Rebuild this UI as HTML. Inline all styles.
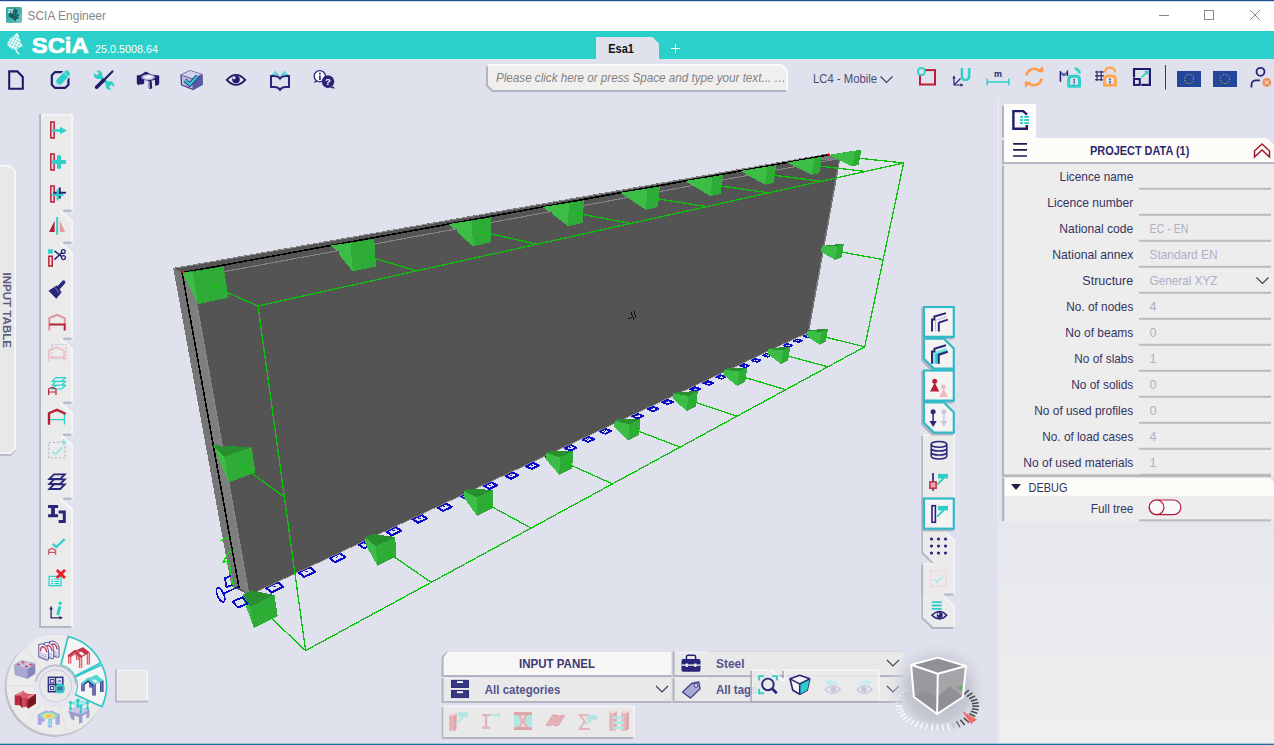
<!DOCTYPE html>
<html><head><meta charset="utf-8"><title>SCIA Engineer</title>
<style>html,body{margin:0;padding:0;background:#dfe1ec;overflow:hidden;width:1274px;height:745px;font-family:"Liberation Sans",sans-serif}svg text{white-space:pre}</style>
</head><body>
<svg width="1274" height="745" viewBox="0 0 1274 745" style="display:block">
<rect x="0.00" y="0.00" width="1274.00" height="745.00" fill="#dfe1ec" />
<rect x="0.00" y="0.00" width="1274.00" height="31.00" fill="#ffffff" />
<rect x="0.00" y="0.00" width="1274.00" height="1.20" fill="#1d4f8f" />
<text x="27.50" y="20.00" font-size="12.3" fill="#878787" font-weight="normal" text-anchor="start" font-style="normal" font-family="Liberation Sans, sans-serif" textLength="78.50" lengthAdjust="spacingAndGlyphs" >SCIA Engineer</text>
<path d="M1159 15.5 h10" stroke="#8a8a8a" stroke-width="1"/>
<rect x="1204.5" y="10.5" width="9" height="9" fill="none" stroke="#8a8a8a" stroke-width="1"/>
<path d="M1250 10 l10 10 M1260 10 l-10 10" stroke="#8a8a8a" stroke-width="1"/>
<rect x="0.00" y="31.00" width="1274.00" height="28.00" fill="#2ad0c9" />
<text x="31.80" y="52.80" font-size="21.2" fill="#fff" font-weight="bold" text-anchor="start" font-style="normal" font-family="Liberation Sans, sans-serif" textLength="56.80" lengthAdjust="spacingAndGlyphs" stroke="#fff" stroke-width="0.7">SCiA</text>
<text x="95.00" y="53.00" font-size="11" fill="#fff" font-weight="normal" text-anchor="start" font-style="normal" font-family="Liberation Sans, sans-serif" textLength="63.00" lengthAdjust="spacingAndGlyphs" >25.0.5008.64</text>
<polygon points="596.00,59.00 596.00,37.00 652.50,37.00 659.00,43.50 659.00,59.00" fill="#dfe1ec" />
<text x="608.30" y="53.30" font-size="12" fill="#111" font-weight="bold" text-anchor="start" font-style="normal" font-family="Liberation Sans, sans-serif" textLength="25.60" lengthAdjust="spacingAndGlyphs" >Esa1</text>
<path d="M671 48.500 h9 M675.500 44 v9" stroke="#fff" stroke-width="1"/>
<rect x="0.00" y="742.80" width="1274.00" height="1.00" fill="#e6e7f0" />
<rect x="0.00" y="743.70" width="1274.00" height="1.30" fill="#1d719c" />
<rect x="997.80" y="99.00" width="1.20" height="644.00" fill="#eceef3" />
<g shape-rendering="crispEdges"><polygon points="173.20,267.90 827.50,153.60 839.70,158.50 808.40,332.30 249.00,595.20 231.40,586.00" fill="#545454" />
<polygon points="173.20,267.90 192.00,277.50 249.00,595.20 239.00,587.60 231.40,586.00" fill="#767676" />
<polygon points="182.10,272.60 192.00,277.50 249.00,595.20 239.00,587.60" fill="#7e7e7e" />
<line x1="173.20" y1="268.50" x2="827.50" y2="154.20" stroke="#8a8a8a" stroke-width="1.0" />
<polygon points="812.00,157.30 827.50,153.60 839.70,158.50 826.00,160.30" fill="#7a7a7a" />
<polyline points="239.00,587.60 182.10,272.60 828.40,154.90" fill="none" stroke="#000" stroke-width="1.6" stroke-linejoin="miter"/>
<circle cx="182.3" cy="272.3" r="1.2" fill="#ff0000"/>
<circle cx="828.6" cy="154.6" r="1.3" fill="#ff0000"/>
<polygon points="266.06,587.77 277.68,582.26 282.98,586.96 271.36,592.47" fill="none" stroke="#0a0acd" stroke-width="2.1" stroke-linejoin="round"/>
<line x1="272.59" y1="586.84" x2="275.71" y2="586.44" stroke="#0a0acd" stroke-width="0.9" />
<polygon points="298.66,572.50 309.62,567.30 315.05,571.72 304.09,576.93" fill="none" stroke="#0a0acd" stroke-width="2.1" stroke-linejoin="round"/>
<line x1="304.95" y1="571.62" x2="307.95" y2="571.24" stroke="#0a0acd" stroke-width="0.9" />
<polygon points="329.46,558.08 339.83,553.16 345.36,557.33 334.99,562.24" fill="none" stroke="#0a0acd" stroke-width="2.1" stroke-linejoin="round"/>
<line x1="335.53" y1="557.24" x2="338.43" y2="556.88" stroke="#0a0acd" stroke-width="0.9" />
<polygon points="358.62,544.43 368.44,539.77 374.05,543.70 364.23,548.36" fill="none" stroke="#0a0acd" stroke-width="2.1" stroke-linejoin="round"/>
<line x1="364.47" y1="543.63" x2="367.28" y2="543.28" stroke="#0a0acd" stroke-width="0.9" />
<polygon points="386.25,531.49 395.56,527.07 401.24,530.79 391.93,535.21" fill="none" stroke="#0a0acd" stroke-width="2.1" stroke-linejoin="round"/>
<line x1="391.91" y1="530.73" x2="394.63" y2="530.40" stroke="#0a0acd" stroke-width="0.9" />
<polygon points="412.48,519.21 421.33,515.01 427.05,518.53 418.21,522.73" fill="none" stroke="#0a0acd" stroke-width="2.1" stroke-linejoin="round"/>
<line x1="417.96" y1="518.48" x2="420.59" y2="518.17" stroke="#0a0acd" stroke-width="0.9" />
<polygon points="437.41,507.54 445.82,503.55 451.58,506.89 443.17,510.88" fill="none" stroke="#0a0acd" stroke-width="2.1" stroke-linejoin="round"/>
<line x1="442.71" y1="506.84" x2="445.26" y2="506.55" stroke="#0a0acd" stroke-width="0.9" />
<polygon points="461.14,496.43 469.14,492.63 474.93,495.81 466.92,499.61" fill="none" stroke="#0a0acd" stroke-width="2.1" stroke-linejoin="round"/>
<line x1="466.28" y1="495.77" x2="468.74" y2="495.49" stroke="#0a0acd" stroke-width="0.9" />
<polygon points="483.74,485.85 491.37,482.23 497.18,485.25 489.54,488.87" fill="none" stroke="#0a0acd" stroke-width="2.1" stroke-linejoin="round"/>
<line x1="488.73" y1="485.22" x2="491.12" y2="484.95" stroke="#0a0acd" stroke-width="0.9" />
<polygon points="505.30,475.76 512.59,472.31 518.40,475.18 511.11,478.64" fill="none" stroke="#0a0acd" stroke-width="2.1" stroke-linejoin="round"/>
<line x1="510.14" y1="475.16" x2="512.47" y2="474.90" stroke="#0a0acd" stroke-width="0.9" />
<polygon points="525.89,466.13 532.85,462.83 538.66,465.57 531.70,468.87" fill="none" stroke="#0a0acd" stroke-width="2.1" stroke-linejoin="round"/>
<line x1="530.59" y1="465.55" x2="532.86" y2="465.30" stroke="#0a0acd" stroke-width="0.9" />
<polygon points="545.58,456.92 552.23,453.76 558.03,456.38 551.38,459.53" fill="none" stroke="#0a0acd" stroke-width="2.1" stroke-linejoin="round"/>
<line x1="550.14" y1="456.36" x2="552.35" y2="456.12" stroke="#0a0acd" stroke-width="0.9" />
<polygon points="564.41,448.11 570.78,445.08 576.57,447.58 570.20,450.61" fill="none" stroke="#0a0acd" stroke-width="1.8" stroke-linejoin="round"/>
<line x1="568.85" y1="447.57" x2="571.00" y2="447.34" stroke="#0a0acd" stroke-width="0.9" />
<polygon points="582.45,439.67 588.55,436.77 594.32,439.16 588.22,442.06" fill="none" stroke="#0a0acd" stroke-width="1.8" stroke-linejoin="round"/>
<line x1="586.77" y1="439.15" x2="588.86" y2="438.93" stroke="#0a0acd" stroke-width="0.9" />
<polygon points="599.74,431.58 605.59,428.80 611.34,431.09 605.49,433.87" fill="none" stroke="#0a0acd" stroke-width="1.8" stroke-linejoin="round"/>
<line x1="603.95" y1="431.08" x2="605.99" y2="430.87" stroke="#0a0acd" stroke-width="0.9" />
<polygon points="616.33,423.82 621.95,421.15 627.68,423.34 622.06,426.01" fill="none" stroke="#0a0acd" stroke-width="1.8" stroke-linejoin="round"/>
<line x1="620.44" y1="423.34" x2="622.42" y2="423.14" stroke="#0a0acd" stroke-width="0.9" />
<polygon points="632.27,416.36 637.66,413.80 643.36,415.91 637.97,418.47" fill="none" stroke="#0a0acd" stroke-width="1.8" stroke-linejoin="round"/>
<line x1="636.27" y1="415.91" x2="638.20" y2="415.71" stroke="#0a0acd" stroke-width="0.9" />
<polygon points="647.58,409.20 652.77,406.74 658.43,408.76 653.25,411.22" fill="none" stroke="#0a0acd" stroke-width="1.8" stroke-linejoin="round"/>
<line x1="651.48" y1="408.76" x2="653.37" y2="408.57" stroke="#0a0acd" stroke-width="0.9" />
<polygon points="662.31,402.31 667.30,399.94 672.93,401.89 667.94,404.26" fill="none" stroke="#0a0acd" stroke-width="1.8" stroke-linejoin="round"/>
<line x1="666.12" y1="401.89" x2="667.96" y2="401.71" stroke="#0a0acd" stroke-width="0.9" />
<polygon points="676.49,395.68 681.29,393.40 686.89,395.27 682.09,397.55" fill="none" stroke="#0a0acd" stroke-width="1.8" stroke-linejoin="round"/>
<line x1="680.21" y1="395.27" x2="682.01" y2="395.10" stroke="#0a0acd" stroke-width="0.9" />
<polygon points="690.14,389.30 694.77,387.10 700.33,388.90 695.71,391.10" fill="none" stroke="#0a0acd" stroke-width="1.8" stroke-linejoin="round"/>
<line x1="693.78" y1="388.90" x2="695.54" y2="388.73" stroke="#0a0acd" stroke-width="0.9" />
<polygon points="703.30,383.14 707.77,381.02 713.29,382.76 708.83,384.88" fill="none" stroke="#0a0acd" stroke-width="1.8" stroke-linejoin="round"/>
<line x1="706.86" y1="382.76" x2="708.58" y2="382.60" stroke="#0a0acd" stroke-width="0.9" />
<polygon points="716.00,377.20 720.30,375.16 725.79,376.83 721.49,378.88" fill="none" stroke="#0a0acd" stroke-width="1.5" stroke-linejoin="round"/>
<line x1="719.47" y1="376.84" x2="721.16" y2="376.68" stroke="#0a0acd" stroke-width="0.9" />
<polygon points="728.25,371.47 732.41,369.50 737.85,371.12 733.70,373.09" fill="none" stroke="#0a0acd" stroke-width="1.5" stroke-linejoin="round"/>
<line x1="731.65" y1="371.12" x2="733.30" y2="370.97" stroke="#0a0acd" stroke-width="0.9" />
<polygon points="740.09,365.94 744.10,364.04 749.50,365.60 745.49,367.50" fill="none" stroke="#0a0acd" stroke-width="1.5" stroke-linejoin="round"/>
<line x1="743.41" y1="365.60" x2="745.03" y2="365.45" stroke="#0a0acd" stroke-width="0.9" />
<polygon points="751.52,360.60 755.40,358.75 760.76,360.26 756.88,362.10" fill="none" stroke="#0a0acd" stroke-width="1.5" stroke-linejoin="round"/>
<line x1="754.78" y1="360.26" x2="756.36" y2="360.12" stroke="#0a0acd" stroke-width="0.9" />
<polygon points="762.58,355.43 766.33,353.65 771.65,355.10 767.90,356.88" fill="none" stroke="#0a0acd" stroke-width="1.5" stroke-linejoin="round"/>
<line x1="765.77" y1="355.11" x2="767.31" y2="354.97" stroke="#0a0acd" stroke-width="0.9" />
<polygon points="773.27,350.43 776.90,348.70 782.18,350.11 778.55,351.84" fill="none" stroke="#0a0acd" stroke-width="1.5" stroke-linejoin="round"/>
<line x1="776.40" y1="350.12" x2="777.92" y2="349.98" stroke="#0a0acd" stroke-width="0.9" />
<polygon points="783.63,345.59 787.14,343.92 792.37,345.28 788.86,346.95" fill="none" stroke="#0a0acd" stroke-width="1.5" stroke-linejoin="round"/>
<line x1="786.69" y1="345.29" x2="788.18" y2="345.16" stroke="#0a0acd" stroke-width="0.9" />
<polygon points="793.65,340.90 797.05,339.28 802.24,340.61 798.84,342.22" fill="none" stroke="#0a0acd" stroke-width="1.5" stroke-linejoin="round"/>
<line x1="796.66" y1="340.61" x2="798.11" y2="340.48" stroke="#0a0acd" stroke-width="0.9" />
<polygon points="803.37,336.36 806.66,334.79 811.81,336.08 808.51,337.64" fill="none" stroke="#0a0acd" stroke-width="1.5" stroke-linejoin="round"/>
<line x1="806.31" y1="336.08" x2="807.74" y2="335.96" stroke="#0a0acd" stroke-width="0.9" />
<polygon points="182.10,272.60 223.57,266.47 228.40,297.69 182.10,272.60" fill="#2fac38" /><polygon points="182.10,272.60 228.40,297.69 197.90,304.13 182.10,272.60" fill="#2fac38" /><polygon points="182.10,272.60 192.40,272.21 223.57,266.47 182.10,272.60" fill="#278f2e" /><polygon points="182.10,272.60 197.90,304.13 192.40,272.21 182.10,272.60" fill="#3cbd45" />
<polygon points="331.41,245.41 374.19,238.79 376.13,266.51 331.41,245.41" fill="#2fac38" /><polygon points="331.41,245.41 376.13,266.51 352.87,271.41 331.41,245.41" fill="#2fac38" /><polygon points="331.41,245.41 350.52,243.14 374.19,238.79 331.41,245.41" fill="#278f2e" /><polygon points="331.41,245.41 352.87,271.41 350.52,243.14 331.41,245.41" fill="#3cbd45" />
<polygon points="448.44,224.10 490.82,217.38 490.98,242.30 448.44,224.10" fill="#2fac38" /><polygon points="448.44,224.10 490.98,242.30 472.66,246.16 448.44,224.10" fill="#2fac38" /><polygon points="448.44,224.10 472.24,220.79 490.82,217.38 448.44,224.10" fill="#278f2e" /><polygon points="448.44,224.10 472.66,246.16 472.24,220.79 448.44,224.10" fill="#3cbd45" />
<polygon points="542.65,206.94 583.84,200.33 582.86,222.96 542.65,206.94" fill="#2fac38" /><polygon points="542.65,206.94 582.86,222.96 568.05,226.08 542.65,206.94" fill="#2fac38" /><polygon points="542.65,206.94 568.86,203.08 583.84,200.33 542.65,206.94" fill="#278f2e" /><polygon points="542.65,206.94 568.05,226.08 568.86,203.08 542.65,206.94" fill="#3cbd45" />
<polygon points="620.11,192.83 659.77,186.43 658.05,207.15 620.11,192.83" fill="#2fac38" /><polygon points="620.11,192.83 658.05,207.15 645.82,209.72 620.11,192.83" fill="#2fac38" /><polygon points="620.11,192.83 647.44,188.69 659.77,186.43 620.11,192.83" fill="#278f2e" /><polygon points="620.11,192.83 645.82,209.72 647.44,188.69 620.11,192.83" fill="#3cbd45" />
<polygon points="684.93,181.03 722.93,174.87 720.71,193.99 684.93,181.03" fill="#2fac38" /><polygon points="684.93,181.03 720.71,193.99 710.45,196.14 684.93,181.03" fill="#2fac38" /><polygon points="684.93,181.03 712.59,176.77 722.93,174.87 684.93,181.03" fill="#278f2e" /><polygon points="684.93,181.03 710.45,196.14 712.59,176.77 684.93,181.03" fill="#3cbd45" />
<polygon points="739.97,171.00 776.29,165.12 773.75,182.85 739.97,171.00" fill="#2fac38" /><polygon points="739.97,171.00 773.75,182.85 765.02,184.68 739.97,171.00" fill="#2fac38" /><polygon points="739.97,171.00 767.51,166.72 776.29,165.12 739.97,171.00" fill="#278f2e" /><polygon points="739.97,171.00 765.02,184.68 767.51,166.72 739.97,171.00" fill="#3cbd45" />
<polygon points="787.29,162.39 821.98,156.77 819.23,173.31 787.29,162.39" fill="#2fac38" /><polygon points="787.29,162.39 819.23,173.31 811.70,174.89 787.29,162.39" fill="#2fac38" /><polygon points="787.29,162.39 814.42,158.15 821.98,156.77 787.29,162.39" fill="#278f2e" /><polygon points="787.29,162.39 811.70,174.89 814.42,158.15 787.29,162.39" fill="#3cbd45" />
<polygon points="828.40,154.90 861.54,149.54 858.65,165.04 828.40,154.90" fill="#2fac38" /><polygon points="828.40,154.90 858.65,165.04 852.10,166.41 828.40,154.90" fill="#2fac38" /><polygon points="828.40,154.90 854.96,150.74 861.54,149.54 828.40,154.90" fill="#278f2e" /><polygon points="828.40,154.90 852.10,166.41 854.96,150.74 828.40,154.90" fill="#3cbd45" />
<polygon points="213.28,445.20 251.55,447.27 255.46,472.56 213.28,445.20" fill="#2fac38" /><polygon points="213.28,445.20 255.46,472.56 228.68,482.42 213.28,445.20" fill="#2fac38" /><polygon points="213.28,445.20 224.24,456.69 251.55,447.27 213.28,445.20" fill="#278f2e" /><polygon points="213.28,445.20 228.68,482.42 224.24,456.69 213.28,445.20" fill="#3cbd45" />
<polygon points="812.99,246.97 844.03,243.56 841.42,257.58 812.99,246.97" fill="#2fac38" /><polygon points="812.99,246.97 841.42,257.58 834.99,259.93 812.99,246.97" fill="#2fac38" /><polygon points="812.99,246.97 837.58,245.77 844.03,243.56 812.99,246.97" fill="#278f2e" /><polygon points="812.99,246.97 834.99,259.93 837.58,245.77 812.99,246.97" fill="#3cbd45" />
<polygon points="192.00,277.50 839.70,158.50 808.40,332.30 249.00,595.20" fill="#545454" />
<line x1="192.00" y1="277.50" x2="839.70" y2="158.50" stroke="#858585" stroke-width="1.1" />
<line x1="192.00" y1="277.50" x2="249.00" y2="595.20" stroke="#868686" stroke-width="1.3" />
<line x1="839.70" y1="158.50" x2="808.40" y2="332.30" stroke="#7c7c7c" stroke-width="1.4" />
<line x1="249.00" y1="595.20" x2="808.40" y2="332.30" stroke="#8a8a8a" stroke-width="0.9" />
<polygon points="196.91,270.41 223.57,266.47 228.40,297.69 198.64,281.56" fill="#2fac38" /><polygon points="198.64,281.56 228.40,297.69 197.90,304.13 187.74,283.86" fill="#2fac38" /><polygon points="185.78,272.46 192.40,272.21 223.57,266.47 196.91,270.41" fill="#278f2e" /><polygon points="187.74,283.86 197.90,304.13 192.40,272.21 185.78,272.46" fill="#3cbd45" /><polygon points="192.40,272.21 223.57,266.47 228.40,297.69 197.90,304.13" fill="#2fac38" />
<polygon points="346.69,243.05 374.19,238.79 376.13,266.51 347.38,252.94" fill="#2fac38" /><polygon points="347.38,252.94 376.13,266.51 352.87,271.41 339.07,254.70" fill="#2fac38" /><polygon points="338.23,244.60 350.52,243.14 374.19,238.79 346.69,243.05" fill="#278f2e" /><polygon points="339.07,254.70 352.87,271.41 350.52,243.14 338.23,244.60" fill="#3cbd45" /><polygon points="350.52,243.14 374.19,238.79 376.13,266.51 352.87,271.41" fill="#2fac38" />
<polygon points="463.58,221.70 490.82,217.38 490.98,242.30 463.64,230.60" fill="#2fac38" /><polygon points="463.64,230.60 490.98,242.30 472.66,246.16 457.09,231.98" fill="#2fac38" /><polygon points="456.94,222.92 472.24,220.79 490.82,217.38 463.58,221.70" fill="#278f2e" /><polygon points="457.09,231.98 472.66,246.16 472.24,220.79 456.94,222.92" fill="#3cbd45" /><polygon points="472.24,220.79 490.82,217.38 490.98,242.30 472.66,246.16" fill="#2fac38" />
<polygon points="557.36,204.58 583.84,200.33 582.86,222.96 557.01,212.66" fill="#2fac38" /><polygon points="557.01,212.66 582.86,222.96 568.05,226.08 551.72,213.78" fill="#2fac38" /><polygon points="552.01,205.56 568.86,203.08 583.84,200.33 557.36,204.58" fill="#278f2e" /><polygon points="551.72,213.78 568.05,226.08 568.86,203.08 552.01,205.56" fill="#3cbd45" /><polygon points="568.86,203.08 583.84,200.33 582.86,222.96 568.05,226.08" fill="#2fac38" />
<polygon points="634.28,190.55 659.77,186.43 658.05,207.15 633.66,197.95" fill="#2fac38" /><polygon points="633.66,197.95 658.05,207.15 645.82,209.72 629.29,198.86" fill="#2fac38" /><polygon points="629.87,191.35 647.44,188.69 659.77,186.43 634.28,190.55" fill="#278f2e" /><polygon points="629.29,198.86 645.82,209.72 647.44,188.69 629.87,191.35" fill="#3cbd45" /><polygon points="647.44,188.69 659.77,186.43 658.05,207.15 645.82,209.72" fill="#2fac38" />
<polygon points="698.50,178.83 722.93,174.87 720.71,193.99 697.71,185.66" fill="#2fac38" /><polygon points="697.71,185.66 720.71,193.99 710.45,196.14 694.05,186.43" fill="#2fac38" /><polygon points="694.81,179.50 712.59,176.77 722.93,174.87 698.50,178.83" fill="#278f2e" /><polygon points="694.05,186.43 710.45,196.14 712.59,176.77 694.81,179.50" fill="#3cbd45" /><polygon points="712.59,176.77 722.93,174.87 720.71,193.99 710.45,196.14" fill="#2fac38" />
<polygon points="752.94,168.90 776.29,165.12 773.75,182.85 752.04,175.23" fill="#2fac38" /><polygon points="752.04,175.23 773.75,182.85 765.02,184.68 748.92,175.89" fill="#2fac38" /><polygon points="749.81,169.48 767.51,166.72 776.29,165.12 752.94,168.90" fill="#278f2e" /><polygon points="748.92,175.89 765.02,184.68 767.51,166.72 749.81,169.48" fill="#3cbd45" /><polygon points="767.51,166.72 776.29,165.12 773.75,182.85 765.02,184.68" fill="#2fac38" />
<polygon points="799.68,160.38 821.98,156.77 819.23,173.31 798.70,166.29" fill="#2fac38" /><polygon points="798.70,166.29 819.23,173.31 811.70,174.89 796.01,166.85" fill="#2fac38" /><polygon points="796.98,160.87 814.42,158.15 821.98,156.77 799.68,160.38" fill="#278f2e" /><polygon points="796.01,166.85 811.70,174.89 814.42,158.15 796.98,160.87" fill="#3cbd45" /><polygon points="814.42,158.15 821.98,156.77 819.23,173.31 811.70,174.89" fill="#2fac38" />
<polygon points="840.23,152.99 861.54,149.54 858.65,165.04 839.20,158.52" fill="#2fac38" /><polygon points="839.20,158.52 858.65,165.04 852.10,166.41 836.86,159.01" fill="#2fac38" /><polygon points="837.89,153.42 854.96,150.74 861.54,149.54 840.23,152.99" fill="#278f2e" /><polygon points="836.86,159.01 852.10,166.41 854.96,150.74 837.89,153.42" fill="#3cbd45" /><polygon points="854.96,150.74 861.54,149.54 858.65,165.04 852.10,166.41" fill="#2fac38" />
<polygon points="251.66,590.25 274.45,595.03 277.69,615.94 252.82,597.72" fill="#2fac38" /><polygon points="252.82,597.72 277.69,615.94 253.83,627.91 244.30,602.00" fill="#2fac38" /><polygon points="242.99,594.43 250.17,606.73 274.45,595.03 251.66,590.25" fill="#278f2e" /><polygon points="244.30,602.00 253.83,627.91 250.17,606.73 242.99,594.43" fill="#3cbd45" /><polygon points="250.17,606.73 274.45,595.03 277.69,615.94 253.83,627.91" fill="#2fac38" />
<polygon points="371.93,534.07 395.13,536.89 396.50,556.35 372.42,541.02" fill="#2fac38" /><polygon points="372.42,541.02 396.50,556.35 377.43,565.91 365.61,544.44" fill="#2fac38" /><polygon points="365.02,537.40 375.78,546.21 395.13,536.89 371.93,534.07" fill="#278f2e" /><polygon points="365.61,544.44 377.43,565.91 375.78,546.21 365.02,537.40" fill="#3cbd45" /><polygon points="375.78,546.21 395.13,536.89 396.50,556.35 377.43,565.91" fill="#2fac38" />
<polygon points="469.62,488.47 492.61,489.98 492.73,508.13 469.66,494.95" fill="#2fac38" /><polygon points="469.66,494.95 492.73,508.13 477.14,515.94 464.09,497.74" fill="#2fac38" /><polygon points="463.98,491.18 476.83,497.57 492.61,489.98 469.62,488.47" fill="#278f2e" /><polygon points="464.09,497.74 477.14,515.94 476.83,497.57 463.98,491.18" fill="#3cbd45" /><polygon points="476.83,497.57 492.61,489.98 492.73,508.13 477.14,515.94" fill="#2fac38" />
<polygon points="550.54,450.70 573.01,451.31 572.28,468.29 550.28,456.76" fill="#2fac38" /><polygon points="550.28,456.76 572.28,468.29 559.29,474.80 545.64,459.09" fill="#2fac38" /><polygon points="545.85,452.95 559.90,457.62 573.01,451.31 550.54,450.70" fill="#278f2e" /><polygon points="545.64,459.09 559.29,474.80 559.90,457.62 545.85,452.95" fill="#3cbd45" /><polygon points="559.90,457.62 573.01,451.31 572.28,468.29 559.29,474.80" fill="#2fac38" />
<polygon points="618.67,418.91 640.46,418.90 639.14,434.84 618.20,424.60" fill="#2fac38" /><polygon points="618.20,424.60 639.14,434.84 628.16,440.33 614.27,426.56" fill="#2fac38" /><polygon points="614.71,420.81 629.39,424.22 640.46,418.90 618.67,418.91" fill="#278f2e" /><polygon points="614.27,426.56 628.16,440.33 629.39,424.22 614.71,420.81" fill="#3cbd45" /><polygon points="629.39,424.22 640.46,418.90 639.14,434.84 628.16,440.33" fill="#2fac38" />
<polygon points="676.83,391.78 697.87,391.32 696.13,406.33 676.21,397.14" fill="#2fac38" /><polygon points="676.21,397.14 696.13,406.33 686.72,411.04 672.84,398.82" fill="#2fac38" /><polygon points="673.44,393.41 688.39,395.87 697.87,391.32 676.83,391.78" fill="#278f2e" /><polygon points="672.84,398.82 686.72,411.04 688.39,395.87 673.44,393.41" fill="#3cbd45" /><polygon points="688.39,395.87 697.87,391.32 696.13,406.33 686.72,411.04" fill="#2fac38" />
<polygon points="727.05,368.36 747.32,367.58 745.29,381.76 726.33,373.42" fill="#2fac38" /><polygon points="726.33,373.42 745.29,381.76 737.13,385.83 723.41,374.88" fill="#2fac38" /><polygon points="724.12,369.76 739.12,371.52 747.32,367.58 727.05,368.36" fill="#278f2e" /><polygon points="723.41,374.88 737.13,385.83 739.12,371.52 724.12,369.76" fill="#3cbd45" /><polygon points="739.12,371.52 747.32,367.58 745.29,381.76 737.13,385.83" fill="#2fac38" />
<polygon points="770.86,347.93 790.36,346.93 788.13,360.35 770.06,352.72" fill="#2fac38" /><polygon points="770.06,352.72 788.13,360.35 780.99,363.92 767.52,354.00" fill="#2fac38" /><polygon points="768.30,349.16 783.19,350.37 790.36,346.93 770.86,347.93" fill="#278f2e" /><polygon points="767.52,354.00 780.99,363.92 783.19,350.37 768.30,349.16" fill="#3cbd45" /><polygon points="783.19,350.37 790.36,346.93 788.13,360.35 780.99,363.92" fill="#2fac38" />
<polygon points="809.41,329.95 828.16,328.79 825.79,341.54 808.57,334.51" fill="#2fac38" /><polygon points="808.57,334.51 825.79,341.54 819.49,344.68 806.32,335.63" fill="#2fac38" /><polygon points="807.16,331.04 821.84,331.82 828.16,328.79 809.41,329.95" fill="#278f2e" /><polygon points="806.32,335.63 819.49,344.68 821.84,331.82 807.16,331.04" fill="#3cbd45" /><polygon points="821.84,331.82 828.16,328.79 825.79,341.54 819.49,344.68" fill="#2fac38" />
<polygon points="226.94,445.94 251.55,447.27 255.46,472.56 228.34,454.97" fill="#2fac38" /><polygon points="228.34,454.97 255.46,472.56 228.68,482.42 218.78,458.49" fill="#2fac38" /><polygon points="217.19,449.30 224.24,456.69 251.55,447.27 226.94,445.94" fill="#278f2e" /><polygon points="218.78,458.49 228.68,482.42 224.24,456.69 217.19,449.30" fill="#3cbd45" /><polygon points="224.24,456.69 251.55,447.27 255.46,472.56 228.68,482.42" fill="#2fac38" />
<polygon points="824.08,245.75 844.03,243.56 841.42,257.58 823.15,250.76" fill="#2fac38" /><polygon points="823.15,250.76 841.42,257.58 834.99,259.93 820.85,251.60" fill="#2fac38" /><polygon points="821.78,246.54 837.58,245.77 844.03,243.56 824.08,245.75" fill="#278f2e" /><polygon points="820.85,251.60 834.99,259.93 837.58,245.77 821.78,246.54" fill="#3cbd45" /><polygon points="837.58,245.77 844.03,243.56 841.42,257.58 834.99,259.93" fill="#2fac38" />
<line x1="210.79" y1="285.23" x2="258.00" y2="306.00" stroke="#0cc00c" stroke-width="1.3" />
<line x1="363.57" y1="255.04" x2="416.49" y2="270.90" stroke="#0cc00c" stroke-width="1.3" />
<line x1="481.77" y1="231.73" x2="536.61" y2="244.29" stroke="#0cc00c" stroke-width="1.3" />
<line x1="575.97" y1="213.17" x2="630.79" y2="223.43" stroke="#0cc00c" stroke-width="1.3" />
<line x1="652.81" y1="198.05" x2="706.62" y2="206.63" stroke="#0cc00c" stroke-width="1.3" />
<line x1="716.70" y1="185.48" x2="768.98" y2="192.82" stroke="#0cc00c" stroke-width="1.3" />
<line x1="770.67" y1="174.88" x2="821.17" y2="181.26" stroke="#0cc00c" stroke-width="1.3" />
<line x1="816.85" y1="165.81" x2="865.49" y2="171.44" stroke="#0cc00c" stroke-width="1.3" />
<line x1="856.83" y1="157.96" x2="903.60" y2="163.00" stroke="#0cc00c" stroke-width="1.3" />
<line x1="264.17" y1="611.41" x2="305.60" y2="650.60" stroke="#0cc00c" stroke-width="1.3" />
<line x1="386.30" y1="551.36" x2="431.16" y2="582.38" stroke="#0cc00c" stroke-width="1.3" />
<line x1="484.90" y1="502.92" x2="531.06" y2="528.09" stroke="#0cc00c" stroke-width="1.3" />
<line x1="566.17" y1="463.03" x2="612.44" y2="483.87" stroke="#0cc00c" stroke-width="1.3" />
<line x1="634.33" y1="429.59" x2="680.01" y2="447.15" stroke="#0cc00c" stroke-width="1.3" />
<line x1="692.31" y1="401.16" x2="737.02" y2="416.18" stroke="#0cc00c" stroke-width="1.3" />
<line x1="742.24" y1="376.69" x2="785.75" y2="389.70" stroke="#0cc00c" stroke-width="1.3" />
<line x1="785.68" y1="355.41" x2="827.89" y2="366.80" stroke="#0cc00c" stroke-width="1.3" />
<line x1="823.83" y1="336.72" x2="864.70" y2="346.80" stroke="#0cc00c" stroke-width="1.3" />
<line x1="240.16" y1="464.78" x2="284.38" y2="497.01" stroke="#0cc00c" stroke-width="1.3" />
<line x1="839.52" y1="251.73" x2="883.16" y2="259.57" stroke="#0cc00c" stroke-width="1.3" />
<polygon points="258.00,306.00 903.60,163.00 864.70,346.80 305.60,650.60" fill="none" stroke="#0cc00c" stroke-width="1.3" />
<path d="M628 319 l4 -2 M631 312 l3 8 M634 311 l2 7" stroke="#111" stroke-width="1" fill="none"/>
<path d="M220.6 541 q4.4 -3.4 8.6 -2.8 M231.4 549 l-8.6 13.4 l5.6 -1.4 l1.2 4 l3.4 22" stroke="#10d810" stroke-width="1.4" fill="none"/>
<path d="M231 575.6 l-6 2.6 l1.4 9 l6 -2.4" stroke="#0a0acd" stroke-width="1.9" fill="none" stroke-linejoin="round"/>
<path d="M238.3 586.8 l-15.6 7.2" stroke="#0a0acd" stroke-width="1.6" fill="none"/>
<ellipse cx="220.6" cy="594.9" rx="3.2" ry="7.6" transform="rotate(-24 220.6 594.9)" stroke="#0a0acd" stroke-width="1.7" fill="none"/>
<path d="M232.6 601.6 l9.6 -4.2 l5.6 6 l-9.8 4.2 z" stroke="#0a0acd" stroke-width="1.9" fill="none" stroke-linejoin="round"/></g>
<polygon points="486.00,66.20 782.00,66.20 786.00,70.00 786.00,92.00 492.00,92.00 486.00,86.00" fill="#b3b5c2" />
<polygon points="488.10,64.00 782.00,64.00 788.00,70.00 788.00,89.80 493.00,89.80 488.10,85.00" fill="#fafafa" />
<polygon points="488.10,66.00 781.00,66.00 786.40,71.20 786.40,89.80 493.00,89.80 488.10,85.00" fill="#f0efee" />
<text x="496.00" y="82.00" font-size="12.2" fill="#828282" font-weight="normal" text-anchor="start" font-style="italic" font-family="Liberation Sans, sans-serif" textLength="290.00" lengthAdjust="spacingAndGlyphs" >Please click here or press Space and type your text... …</text>
<text x="813.00" y="83.00" font-size="12.3" fill="#4a4a7a" font-weight="normal" text-anchor="start" font-style="normal" font-family="Liberation Sans, sans-serif" textLength="64.00" lengthAdjust="spacingAndGlyphs" >LC4 - Mobile</text>
<path d="M880.5 76.5 l6 6 l6 -6" stroke="#3a3a5a" stroke-width="1.1" fill="none"/>
<rect x="39.20" y="114.00" width="2.40" height="514.00" fill="#b3b5c2" />
<rect x="39.20" y="626.00" width="32.00" height="2.00" fill="#b3b5c2" />
<rect x="41.10" y="114.00" width="32.00" height="512.00" fill="#f6f6f7" />
<rect x="41.10" y="115.30" width="30.20" height="510.70" fill="#ebebeb" />
<polygon points="63.20,209.80 73.30,209.80 73.30,221.20 72.90,221.00 62.40,211.80" fill="#dfe1ec" />
<rect x="63.20" y="209.80" width="8.00" height="2.00" fill="#b3b5c2" />
<polygon points="61.40,211.80 62.80,211.40 73.10,220.40 73.10,223.20 71.30,223.20 71.30,222.10 60.00,212.40" fill="#f6f6f7" />
<polygon points="63.20,241.80 73.30,241.80 73.30,253.20 72.90,253.00 62.40,243.80" fill="#dfe1ec" />
<rect x="63.20" y="241.80" width="8.00" height="2.00" fill="#b3b5c2" />
<polygon points="61.40,243.80 62.80,243.40 73.10,252.40 73.10,255.20 71.30,255.20 71.30,254.10 60.00,244.40" fill="#f6f6f7" />
<polygon points="63.20,337.80 73.30,337.80 73.30,349.20 72.90,349.00 62.40,339.80" fill="#dfe1ec" />
<rect x="63.20" y="337.80" width="8.00" height="2.00" fill="#b3b5c2" />
<polygon points="61.40,339.80 62.80,339.40 73.10,348.40 73.10,351.20 71.30,351.20 71.30,350.10 60.00,340.40" fill="#f6f6f7" />
<polygon points="63.20,401.80 73.30,401.80 73.30,413.20 72.90,413.00 62.40,403.80" fill="#dfe1ec" />
<rect x="63.20" y="401.80" width="8.00" height="2.00" fill="#b3b5c2" />
<polygon points="61.40,403.80 62.80,403.40 73.10,412.40 73.10,415.20 71.30,415.20 71.30,414.10 60.00,404.40" fill="#f6f6f7" />
<polygon points="63.20,433.80 73.30,433.80 73.30,445.20 72.90,445.00 62.40,435.80" fill="#dfe1ec" />
<rect x="63.20" y="433.80" width="8.00" height="2.00" fill="#b3b5c2" />
<polygon points="61.40,435.80 62.80,435.40 73.10,444.40 73.10,447.20 71.30,447.20 71.30,446.10 60.00,436.40" fill="#f6f6f7" />
<polygon points="63.20,497.80 73.30,497.80 73.30,509.20 72.90,509.00 62.40,499.80" fill="#dfe1ec" />
<rect x="63.20" y="497.80" width="8.00" height="2.00" fill="#b3b5c2" />
<polygon points="61.40,499.80 62.80,499.40 73.10,508.40 73.10,511.20 71.30,511.20 71.30,510.10 60.00,500.40" fill="#f6f6f7" />
<polygon points="0.00,165.00 10.50,165.00 16.20,170.70 16.20,450.00 11.00,455.80 0.00,455.80" fill="#b3b5c2" />
<polygon points="0.00,165.00 10.50,165.00 16.20,170.70 16.20,449.00 11.00,454.00 0.00,454.00" fill="#f6f7f9" />
<polygon points="0.00,166.80 9.50,166.80 14.30,171.60 14.30,448.50 10.00,452.50 0.00,452.50" fill="#e8e8e8" />
<g transform="translate(2.6,272.5) rotate(90)"><text x="0.00" y="0.00" font-size="10.6" fill="#5c5e7e" font-weight="bold" text-anchor="start" font-style="normal" font-family="Liberation Sans, sans-serif" textLength="75.50" lengthAdjust="spacingAndGlyphs" >INPUT TABLE</text></g>
<polygon points="921.40,435.90 953.20,435.90 953.20,499.10 921.40,499.10" fill="#b3b5c2" />
<polygon points="923.10,434.20 954.90,434.20 954.90,497.40 923.10,497.40" fill="#f6f6f7" />
<polygon points="923.10,435.50 953.40,435.50 953.40,497.40 923.10,497.40" fill="#ebebeb" />
<rect x="921.40" y="531.70" width="31.80" height="97.00" fill="#b3b5c2" />
<rect x="923.10" y="530.00" width="31.80" height="97.00" fill="#f6f6f7" />
<rect x="923.10" y="531.30" width="30.30" height="95.70" fill="#ebebeb" />
<polygon points="944.30,529.50 955.40,529.50 955.40,540.60" fill="#dfe1ec" />
<polygon points="942.90,530.00 944.30,530.00 954.90,540.60 954.90,543.00 953.40,543.00 953.40,541.60" fill="#f6f6f7" />
<polygon points="921.10,552.40 921.10,563.50 933.10,563.50" fill="#dfe1ec" />
<polygon points="921.40,553.50 923.10,552.30 933.70,562.90 932.10,563.80" fill="#b3b5c2" />
<rect x="921.40" y="564.50" width="1.80" height="30.00" fill="#b3b5c2" />
<rect x="923.10" y="563.20" width="11.60" height="1.40" fill="#f6f6f7" />
<polygon points="943.70,593.60 955.40,593.60 955.40,606.20 954.90,606.20 942.90,595.60" fill="#dfe1ec" />
<rect x="944.30" y="593.60" width="9.00" height="1.90" fill="#b3b5c2" />
<polygon points="941.90,595.60 943.50,595.30 954.90,605.40 954.90,607.80 953.40,607.80 953.40,606.60" fill="#f6f6f7" />
<polygon points="921.10,617.40 921.10,629.20 933.10,629.20" fill="#dfe1ec" />
<polygon points="921.40,618.60 923.10,617.40 933.70,627.20 953.20,627.20 953.20,628.90 932.10,628.90" fill="#b3b5c2" />
<polygon points="921.10,307.60 953.20,307.60 953.20,339.60 921.10,339.60" fill="#b3b5c2" />
<polygon points="922.80,305.90 954.90,305.90 954.90,337.90 922.80,337.90" fill="#30b9c6" />
<polygon points="925.00,308.10 952.70,308.10 952.70,335.70 925.00,335.70" fill="#f5f4f3" />
<polygon points="921.10,339.20 942.60,339.20 953.20,349.80 953.20,371.50 931.70,371.50 921.10,360.90" fill="#b3b5c2" />
<polygon points="922.80,337.50 944.30,337.50 954.90,348.10 954.90,369.80 933.40,369.80 922.80,359.20" fill="#30b9c6" />
<polygon points="925.00,339.70 943.39,339.70 952.70,349.01 952.70,367.60 934.31,367.60 925.00,358.29" fill="#f5f4f3" />
<polygon points="921.10,371.10 953.20,371.10 953.20,403.40 921.10,403.40" fill="#b3b5c2" />
<polygon points="922.80,369.40 954.90,369.40 954.90,401.70 922.80,401.70" fill="#30b9c6" />
<polygon points="925.00,371.60 952.70,371.60 952.70,399.50 925.00,399.50" fill="#f5f4f3" />
<polygon points="921.10,403.00 942.60,403.00 953.20,413.60 953.20,435.50 931.70,435.50 921.10,424.90" fill="#b3b5c2" />
<polygon points="922.80,401.30 944.30,401.30 954.90,411.90 954.90,433.80 933.40,433.80 922.80,423.20" fill="#30b9c6" />
<polygon points="925.00,403.50 943.39,403.50 952.70,412.81 952.70,431.60 934.31,431.60 925.00,422.29" fill="#f5f4f3" />
<polygon points="921.10,499.10 953.20,499.10 953.20,531.50 921.10,531.50" fill="#b3b5c2" />
<polygon points="922.80,497.40 954.90,497.40 954.90,529.80 922.80,529.80" fill="#30b9c6" />
<polygon points="925.00,499.60 952.70,499.60 952.70,527.60 925.00,527.60" fill="#f5f4f3" />
<defs><linearGradient id="rpg" x1="0" y1="0" x2="0" y2="1"><stop offset="0" stop-color="#e6e7ee"/><stop offset="1" stop-color="#efefef"/></linearGradient></defs>
<rect x="999.50" y="521.00" width="274.50" height="222.00" fill="url(#rpg)" />
<rect x="1002.00" y="106.00" width="2.40" height="31.50" fill="#b3b5c2" />
<rect x="1004.00" y="104.00" width="32.00" height="34.50" fill="#fdfcfa" />
<polygon points="1002.00,140.00 1267.00,140.00 1274.00,145.00 1274.00,163.90 1002.00,163.90" fill="#b3b5c2" />
<polygon points="1004.00,138.00 1267.00,138.00 1274.00,145.00 1274.00,162.00 1004.00,162.00" fill="#fdfcf9" />
<text x="1090.00" y="155.40" font-size="12.6" fill="#2b2a6b" font-weight="bold" text-anchor="start" font-style="normal" font-family="Liberation Sans, sans-serif" textLength="99.30" lengthAdjust="spacingAndGlyphs" >PROJECT DATA (1)</text>
<path d="M1013.1 143.9 h13.9 M1013.1 149.9 h13.9 M1013.1 156 h13.9" stroke="#1c1c50" stroke-width="1.7"/>
<path d="M1254.5 151 l7.5 -7 l7.5 7 v6 l-7.5 -7 l-7.5 7 z" fill="none" stroke="#a01830" stroke-width="1.5" stroke-linejoin="miter"/>
<rect x="1002.00" y="165.50" width="2.40" height="311.00" fill="#b3b5c2" />
<rect x="1004.20" y="163.90" width="269.80" height="312.50" fill="#ededed" />
<text x="1133.30" y="180.60" font-size="12.7" fill="#34345f" font-weight="normal" text-anchor="end" font-style="normal" font-family="Liberation Sans, sans-serif" textLength="73.70" lengthAdjust="spacingAndGlyphs" >Licence name</text>
<rect x="1139.00" y="187.80" width="132.00" height="2.00" fill="#bbbbbb" />
<text x="1133.30" y="206.60" font-size="12.7" fill="#34345f" font-weight="normal" text-anchor="end" font-style="normal" font-family="Liberation Sans, sans-serif" textLength="86.00" lengthAdjust="spacingAndGlyphs" >Licence number</text>
<rect x="1139.00" y="213.80" width="132.00" height="2.00" fill="#bbbbbb" />
<text x="1133.30" y="232.60" font-size="12.7" fill="#34345f" font-weight="normal" text-anchor="end" font-style="normal" font-family="Liberation Sans, sans-serif" textLength="74.00" lengthAdjust="spacingAndGlyphs" >National code</text>
<text x="1149.50" y="233.00" font-size="12.7" fill="#afb0c7" font-weight="normal" text-anchor="start" font-style="normal" font-family="Liberation Sans, sans-serif" textLength="39.00" lengthAdjust="spacingAndGlyphs" >EC - EN</text>
<rect x="1139.00" y="239.80" width="132.00" height="2.00" fill="#bbbbbb" />
<text x="1133.30" y="258.60" font-size="12.7" fill="#34345f" font-weight="normal" text-anchor="end" font-style="normal" font-family="Liberation Sans, sans-serif" textLength="81.00" lengthAdjust="spacingAndGlyphs" >National annex</text>
<text x="1149.50" y="259.00" font-size="12.7" fill="#afb0c7" font-weight="normal" text-anchor="start" font-style="normal" font-family="Liberation Sans, sans-serif" textLength="68.00" lengthAdjust="spacingAndGlyphs" >Standard EN</text>
<rect x="1139.00" y="265.80" width="132.00" height="2.00" fill="#bbbbbb" />
<text x="1133.30" y="284.60" font-size="12.7" fill="#34345f" font-weight="normal" text-anchor="end" font-style="normal" font-family="Liberation Sans, sans-serif" textLength="51.00" lengthAdjust="spacingAndGlyphs" >Structure</text>
<text x="1149.50" y="285.00" font-size="12.7" fill="#afb0c7" font-weight="normal" text-anchor="start" font-style="normal" font-family="Liberation Sans, sans-serif" textLength="68.00" lengthAdjust="spacingAndGlyphs" >General XYZ</text>
<rect x="1139.00" y="291.80" width="132.00" height="2.00" fill="#bbbbbb" />
<text x="1133.30" y="310.60" font-size="12.7" fill="#34345f" font-weight="normal" text-anchor="end" font-style="normal" font-family="Liberation Sans, sans-serif" textLength="67.00" lengthAdjust="spacingAndGlyphs" >No. of nodes</text>
<text x="1149.50" y="311.00" font-size="12.7" fill="#afb0c7" font-weight="normal" text-anchor="start" font-style="normal" font-family="Liberation Sans, sans-serif" textLength="7.00" lengthAdjust="spacingAndGlyphs" >4</text>
<rect x="1139.00" y="317.80" width="132.00" height="2.00" fill="#bbbbbb" />
<text x="1133.30" y="336.60" font-size="12.7" fill="#34345f" font-weight="normal" text-anchor="end" font-style="normal" font-family="Liberation Sans, sans-serif" textLength="68.00" lengthAdjust="spacingAndGlyphs" >No of beams</text>
<text x="1149.50" y="337.00" font-size="12.7" fill="#afb0c7" font-weight="normal" text-anchor="start" font-style="normal" font-family="Liberation Sans, sans-serif" textLength="7.00" lengthAdjust="spacingAndGlyphs" >0</text>
<rect x="1139.00" y="343.80" width="132.00" height="2.00" fill="#bbbbbb" />
<text x="1133.30" y="362.60" font-size="12.7" fill="#34345f" font-weight="normal" text-anchor="end" font-style="normal" font-family="Liberation Sans, sans-serif" textLength="59.00" lengthAdjust="spacingAndGlyphs" >No of slabs</text>
<text x="1149.50" y="363.00" font-size="12.7" fill="#afb0c7" font-weight="normal" text-anchor="start" font-style="normal" font-family="Liberation Sans, sans-serif" textLength="7.00" lengthAdjust="spacingAndGlyphs" >1</text>
<rect x="1139.00" y="369.80" width="132.00" height="2.00" fill="#bbbbbb" />
<text x="1133.30" y="388.60" font-size="12.7" fill="#34345f" font-weight="normal" text-anchor="end" font-style="normal" font-family="Liberation Sans, sans-serif" textLength="62.00" lengthAdjust="spacingAndGlyphs" >No of solids</text>
<text x="1149.50" y="389.00" font-size="12.7" fill="#afb0c7" font-weight="normal" text-anchor="start" font-style="normal" font-family="Liberation Sans, sans-serif" textLength="7.00" lengthAdjust="spacingAndGlyphs" >0</text>
<rect x="1139.00" y="395.80" width="132.00" height="2.00" fill="#bbbbbb" />
<text x="1133.30" y="414.60" font-size="12.7" fill="#34345f" font-weight="normal" text-anchor="end" font-style="normal" font-family="Liberation Sans, sans-serif" textLength="99.00" lengthAdjust="spacingAndGlyphs" >No of used profiles</text>
<text x="1149.50" y="415.00" font-size="12.7" fill="#afb0c7" font-weight="normal" text-anchor="start" font-style="normal" font-family="Liberation Sans, sans-serif" textLength="7.00" lengthAdjust="spacingAndGlyphs" >0</text>
<rect x="1139.00" y="421.80" width="132.00" height="2.00" fill="#bbbbbb" />
<text x="1133.30" y="440.60" font-size="12.7" fill="#34345f" font-weight="normal" text-anchor="end" font-style="normal" font-family="Liberation Sans, sans-serif" textLength="91.00" lengthAdjust="spacingAndGlyphs" >No. of load cases</text>
<text x="1149.50" y="441.00" font-size="12.7" fill="#afb0c7" font-weight="normal" text-anchor="start" font-style="normal" font-family="Liberation Sans, sans-serif" textLength="7.00" lengthAdjust="spacingAndGlyphs" >4</text>
<rect x="1139.00" y="447.80" width="132.00" height="2.00" fill="#bbbbbb" />
<text x="1133.30" y="466.60" font-size="12.7" fill="#34345f" font-weight="normal" text-anchor="end" font-style="normal" font-family="Liberation Sans, sans-serif" textLength="110.00" lengthAdjust="spacingAndGlyphs" >No of used materials</text>
<text x="1149.50" y="467.00" font-size="12.7" fill="#afb0c7" font-weight="normal" text-anchor="start" font-style="normal" font-family="Liberation Sans, sans-serif" textLength="7.00" lengthAdjust="spacingAndGlyphs" >1</text>
<rect x="1139.00" y="473.80" width="132.00" height="2.00" fill="#bbbbbb" />
<path d="M1256.5 277.5 l6 6 l6 -6" stroke="#3a3a5a" stroke-width="1.1" fill="none"/>
<rect x="1002.00" y="474.30" width="269.00" height="2.60" fill="#b9b9b9" />
<polygon points="1002.00,478.00 1270.00,478.00 1274.00,482.00 1274.00,496.00 1002.00,496.00" fill="#fdfcf9" />
<rect x="1002.00" y="478.00" width="2.40" height="18.00" fill="#b3b5c2" />
<polygon points="1011.00,484.00 1021.00,484.00 1016.00,490.00" fill="#1e1e4e" />
<text x="1028.50" y="492.00" font-size="12.6" fill="#34345f" font-weight="normal" text-anchor="start" font-style="normal" font-family="Liberation Sans, sans-serif" textLength="39.00" lengthAdjust="spacingAndGlyphs" >DEBUG</text>
<rect x="1002.00" y="496.00" width="272.00" height="25.00" fill="#ededed" />
<rect x="1002.00" y="496.00" width="2.40" height="25.00" fill="#b3b5c2" />
<text x="1133.30" y="512.60" font-size="12.7" fill="#34345f" font-weight="normal" text-anchor="end" font-style="normal" font-family="Liberation Sans, sans-serif" textLength="42.50" lengthAdjust="spacingAndGlyphs" >Full tree</text>
<rect x="1149.3" y="500" width="31.5" height="14.6" rx="7.3" fill="#fbfafa" stroke="#b01c3c" stroke-width="1.2"/>
<circle cx="1156.6" cy="507.3" r="7.3" fill="#fbfafa" stroke="#b01c3c" stroke-width="1.2"/>
<rect x="1139.00" y="519.30" width="132.00" height="2.00" fill="#bbbbbb" />
<polygon points="441.50,657.00 447.00,651.50 671.50,651.50 671.50,677.00 441.50,677.00" fill="#b3b5c2" />
<polygon points="443.60,657.50 448.00,651.50 671.50,651.50 671.50,675.00 443.60,675.00" fill="#f7f6f5" />
<text x="519.00" y="667.80" font-size="12.2" fill="#3b3a74" font-weight="bold" text-anchor="start" font-style="normal" font-family="Liberation Sans, sans-serif" textLength="76.00" lengthAdjust="spacingAndGlyphs" >INPUT PANEL</text>
<rect x="441.50" y="678.00" width="230.00" height="25.00" fill="#b3b5c2" />
<rect x="443.60" y="678.00" width="228.00" height="23.00" fill="#e9e9e9" />
<rect x="443.60" y="678.00" width="34.00" height="1.20" fill="#f6f6f7" />
<text x="484.80" y="693.60" font-size="12.6" fill="#54548e" font-weight="bold" text-anchor="start" font-style="normal" font-family="Liberation Sans, sans-serif" textLength="75.50" lengthAdjust="spacingAndGlyphs" >All categories</text>
<path d="M656 686 l6 6 l6 -6" stroke="#3a3a5a" stroke-width="1.1" fill="none"/>
<rect x="451.5" y="680.3" width="17" height="7.2" fill="#393980" stroke="#24227a" stroke-width="0.9"/><rect x="451.5" y="690.4" width="17" height="7.2" fill="#393980" stroke="#24227a" stroke-width="0.9"/>
<rect x="457.00" y="681.20" width="6.00" height="1.80" fill="#fdfdf8" />
<rect x="457.00" y="691.30" width="6.00" height="1.80" fill="#fdfdf8" />
<rect x="672.50" y="651.50" width="230.50" height="25.50" fill="#b3b5c2" />
<rect x="674.60" y="651.50" width="228.40" height="23.50" fill="#e9e9e9" />
<rect x="674.60" y="651.50" width="34.00" height="1.20" fill="#f6f6f7" />
<text x="716.00" y="667.60" font-size="12.6" fill="#54548e" font-weight="bold" text-anchor="start" font-style="normal" font-family="Liberation Sans, sans-serif" textLength="28.50" lengthAdjust="spacingAndGlyphs" >Steel</text>
<path d="M887 660 l6 6 l6 -6" stroke="#3a3a5a" stroke-width="1.1" fill="none"/>
<rect x="672.50" y="678.00" width="230.50" height="25.00" fill="#b3b5c2" />
<rect x="674.60" y="678.00" width="228.40" height="23.00" fill="#e9e9e9" />
<rect x="674.60" y="678.00" width="34.00" height="1.20" fill="#f6f6f7" />
<text x="716.00" y="693.60" font-size="12.6" fill="#54548e" font-weight="bold" text-anchor="start" font-style="normal" font-family="Liberation Sans, sans-serif" textLength="41.50" lengthAdjust="spacingAndGlyphs" >All tags</text>
<path d="M887 686 l6 6 l6 -6" stroke="#3a3a5a" stroke-width="1.1" fill="none"/>
<rect x="441.70" y="707.60" width="191.20" height="31.40" fill="#b3b5c2" />
<rect x="443.60" y="705.60" width="191.30" height="31.40" fill="#f6f6f8" />
<rect x="443.60" y="707.00" width="189.70" height="30.00" fill="#e9e9ea" />
<defs><radialGradient id="ng" cx="0.5" cy="0.5" r="0.5"><stop offset="0" stop-color="#b4b6c2"/><stop offset="0.6" stop-color="#c6c8d4"/><stop offset="1" stop-color="#dfe1ec" stop-opacity="0"/></radialGradient></defs>
<ellipse cx="938" cy="690" rx="52" ry="50" fill="url(#ng)"/>
<line x1="979.00" y1="706.20" x2="972.36" y2="706.20" stroke="#48484c" stroke-width="1.5" />
<line x1="978.58" y1="709.73" x2="972.01" y2="708.74" stroke="#48484c" stroke-width="1.5" />
<line x1="977.32" y1="713.19" x2="970.95" y2="711.23" stroke="#48484c" stroke-width="1.5" />
<line x1="975.25" y1="716.50" x2="969.21" y2="713.62" stroke="#48484c" stroke-width="1.5" />
<line x1="972.41" y1="719.61" x2="966.83" y2="715.85" stroke="#48484c" stroke-width="1.5" />
<line x1="968.86" y1="722.44" x2="963.85" y2="717.89" stroke="#48484c" stroke-width="1.5" />
<line x1="964.68" y1="724.94" x2="960.33" y2="719.69" stroke="#48484c" stroke-width="1.5" />
<line x1="959.94" y1="727.06" x2="956.35" y2="721.22" stroke="#6c6c72" stroke-width="1.4" />
<line x1="954.74" y1="728.76" x2="951.98" y2="722.44" stroke="#c4c4ca" stroke-width="1.4" />
<line x1="949.19" y1="730.00" x2="947.32" y2="723.33" stroke="#f6f6f8" stroke-width="1.7" />
<line x1="943.41" y1="730.75" x2="942.46" y2="723.87" stroke="#f6f6f8" stroke-width="1.7" />
<line x1="937.50" y1="731.00" x2="937.50" y2="724.06" stroke="#f6f6f8" stroke-width="1.7" />
<line x1="931.59" y1="730.75" x2="932.54" y2="723.87" stroke="#f6f6f8" stroke-width="1.7" />
<line x1="925.81" y1="730.00" x2="927.68" y2="723.33" stroke="#f6f6f8" stroke-width="1.7" />
<line x1="920.26" y1="728.76" x2="923.02" y2="722.44" stroke="#f6f6f8" stroke-width="1.7" />
<line x1="915.06" y1="727.06" x2="918.65" y2="721.22" stroke="#f6f6f8" stroke-width="1.7" />
<line x1="910.32" y1="724.94" x2="914.67" y2="719.69" stroke="#f6f6f8" stroke-width="1.7" />
<line x1="906.14" y1="722.44" x2="911.15" y2="717.89" stroke="#f6f6f8" stroke-width="1.7" />
<line x1="902.59" y1="719.61" x2="908.17" y2="715.85" stroke="#f6f6f8" stroke-width="1.7" />
<line x1="899.75" y1="716.50" x2="905.79" y2="713.62" stroke="#f6f6f8" stroke-width="1.7" />
<line x1="897.68" y1="713.19" x2="904.05" y2="711.23" stroke="#f6f6f8" stroke-width="1.7" />
<line x1="896.42" y1="709.73" x2="902.99" y2="708.74" stroke="#f6f6f8" stroke-width="1.7" />
<line x1="896.00" y1="706.20" x2="902.64" y2="706.20" stroke="#f6f6f8" stroke-width="1.7" />
<circle cx="896.4" cy="702.7" r="0.8" fill="#f6f6f8"/>
<circle cx="897.7" cy="699.2" r="0.8" fill="#f6f6f8"/>
<circle cx="899.8" cy="695.9" r="0.8" fill="#f6f6f8"/>
<circle cx="902.6" cy="692.8" r="0.8" fill="#f6f6f8"/>
<circle cx="906.1" cy="690.0" r="0.8" fill="#f6f6f8"/>
<line x1="968.86" y1="689.96" x2="963.85" y2="694.51" stroke="#48484c" stroke-width="1.5" />
<line x1="972.41" y1="692.79" x2="966.83" y2="696.55" stroke="#48484c" stroke-width="1.5" />
<line x1="975.25" y1="695.90" x2="969.21" y2="698.78" stroke="#48484c" stroke-width="1.5" />
<line x1="977.32" y1="699.21" x2="970.95" y2="701.17" stroke="#48484c" stroke-width="1.5" />
<line x1="978.58" y1="702.67" x2="972.01" y2="703.66" stroke="#48484c" stroke-width="1.5" />
<polygon points="937.80,657.60 966.00,666.00 937.80,673.80 911.10,664.70" fill="#8d8d92" stroke="none" stroke-width="0" fill-opacity="0.95"/>
<polygon points="911.10,664.70 937.80,673.80 937.10,714.00 913.90,697.00" fill="#98989d" stroke="none" stroke-width="0" fill-opacity="0.95"/>
<polygon points="937.80,673.80 966.00,666.00 962.90,697.00 937.10,714.00" fill="#a3a3a7" stroke="none" stroke-width="0" fill-opacity="0.95"/>
<polygon points="913.90,697.00 925.00,690.50 937.30,697.00 937.10,714.00" fill="#909095" />
<polygon points="937.30,697.00 950.00,686.00 962.90,697.00 937.10,714.00" fill="#8f8f94" />
<polyline points="911.10,664.70 937.80,657.60 966.00,666.00 937.80,673.80 911.10,664.70 913.90,697.00 937.10,714.00 962.90,697.00 966.00,666.00" fill="none" stroke="#ffffff" stroke-width="2" stroke-linejoin="round"/>
<line x1="937.80" y1="673.80" x2="937.10" y2="714.00" stroke="#ffffff" stroke-width="2" />
<polygon points="962.00,711.00 977.00,719.50 971.00,724.00" fill="#f26a6a" />
<polygon points="956.50,688.00 962.50,685.00 961.50,690.50" fill="#5cb85c" />
<g opacity="0.88">
<polygon points="750.30,671.00 752.20,671.00 752.20,700.50 878.00,700.50 878.00,702.40 750.30,702.40" fill="#a9abb8" />
<rect x="782.20" y="671.00" width="1.90" height="7.00" fill="#a9abb8" />
<polygon points="752.20,669.40 772.70,669.40 783.40,679.60 784.00,679.60 784.00,669.40 879.80,669.40 879.80,700.50 752.20,700.50" fill="#f8f8f9" />
<polygon points="752.20,671.00 771.20,671.00 782.00,681.30 785.60,681.30 785.60,671.00 878.20,671.00 878.20,700.50 752.20,700.50" fill="#ebebeb" />
</g>
<rect x="115.00" y="669.50" width="33.00" height="33.00" fill="#b3b5c2" />
<rect x="116.80" y="669.50" width="31.20" height="31.00" fill="#f6f6f8" />
<rect x="116.80" y="671.00" width="29.80" height="29.50" fill="#e9e9e9" />
<defs><radialGradient id="wg" cx="0.5" cy="0.5" r="0.5"><stop offset="0.9" stop-color="#ebebeb"/><stop offset="1" stop-color="#e3e4ea"/></radialGradient></defs>
<circle cx="56.1" cy="685.2" r="49.8" fill="#f4f4f7"/>
<circle cx="54.5" cy="687.1" r="49.8" fill="#bfc1cd"/>
<circle cx="55.6" cy="685.8" r="49.0" fill="#ebebeb"/>
<line x1="35.60" y1="685.80" x2="6.00" y2="685.80" stroke="#dcdce0" stroke-width="0.8" />
<line x1="43.13" y1="670.16" x2="24.67" y2="647.02" stroke="#dcdce0" stroke-width="0.8" />
<line x1="60.05" y1="666.30" x2="66.64" y2="637.44" stroke="#dcdce0" stroke-width="0.8" />
<line x1="73.62" y1="677.12" x2="100.29" y2="664.28" stroke="#dcdce0" stroke-width="0.8" />
<line x1="73.62" y1="694.48" x2="100.29" y2="707.32" stroke="#dcdce0" stroke-width="0.8" />
<line x1="60.05" y1="705.30" x2="66.64" y2="734.16" stroke="#dcdce0" stroke-width="0.8" />
<line x1="43.13" y1="701.44" x2="24.67" y2="724.58" stroke="#dcdce0" stroke-width="0.8" />
<path d="M60.91 665.07 L68.20 636.59 A50.80 50.80 0 0 1 100.90 662.81 L74.68 676.11 A21.40 21.40 0 0 0 60.91 665.07 Z" fill="#f5f4f4" stroke="#2fc4c8" stroke-width="1.6" stroke-linejoin="miter"/>
<path d="M75.07 676.92 L101.82 664.72 A50.80 50.80 0 0 1 101.93 706.64 L75.12 694.58 A21.40 21.40 0 0 0 75.07 676.92 Z" fill="#f5f4f4" stroke="#2fc4c8" stroke-width="1.6" stroke-linejoin="miter"/>
<circle cx="55.6" cy="685.8" r="21.3" fill="#e5e6f1"/>
<path d="M35.9 680.5 A20.4 20.4 0 0 1 75.9 684.0" stroke="#b9bbc8" stroke-width="1.8" fill="none" stroke-linecap="round"/>
<circle cx="55.6" cy="685.8" r="16" fill="#e9e9ea" stroke="#cfd0dc" stroke-width="1.2"/>
<g transform="translate(16.0,80.0)"><path d="M-6.8 -8.6 h8.2 l5.4 5.6 v11.8 h-13.6 z" fill="none" stroke="#1f1d6b" stroke-width="2.1" stroke-linejoin="miter"/></g>
<g transform="translate(60.6,80.0)"><path d="M-5.8 -7.8 h10.6 l3 3 v9.6 l-3 3 h-10.6 l-3 -3 v-9.6 z" fill="none" stroke="#1f1d6b" stroke-width="2.2" stroke-linejoin="round"/><g transform="translate(2.3,-2.2) rotate(-46)"><path d="M-9.6 0 l3.4 -3.8 h12 q3 0 3 3 v1.6 q0 3 -3 3 h-12 z" fill="#dfe1ec" stroke="#dfe1ec" stroke-width="1.3"/><path d="M-9.6 0 l3.4 -3.2 h12.2 q2.6 0 2.6 2.6 v1.2 q0 2.6 -2.6 2.6 h-12.2 z" fill="#2ecfc9"/><path d="M4.6 -3 v6" stroke="#bdf1ef" stroke-width="0.8"/><path d="M-9.4 0 l1.6 -1.5 v3 z" fill="#e8fbfa"/></g></g>
<g transform="translate(104.0,80.0)"><path d="M-5.6 -5 l11.4 10.4" stroke="#2ecfc9" stroke-width="3.2"/><g transform="translate(-5.9,-5.3) rotate(-45)"><circle r="4.3" fill="#2ecfc9"/><rect x="-1.7" y="-6" width="3.4" height="5.6" fill="#dfe1ec"/></g><g transform="translate(5.9,5.5) rotate(135)"><circle r="4.3" fill="#2ecfc9"/><rect x="-1.7" y="-6" width="3.4" height="5.6" fill="#dfe1ec"/></g><path d="M-7.4 7.2 l6.8 -6.8" stroke="#1f1d6b" stroke-width="3.6" stroke-linecap="round"/><path d="M-1 1 l9.4 -9.6" stroke="#1f1d6b" stroke-width="2.2" stroke-linecap="round"/></g>
<defs><radialGradient id="stg" cx="0.5" cy="0.5" r="0.5"><stop offset="0" stop-color="#ffffff"/><stop offset="0.6" stop-color="#d9d9ee"/><stop offset="1" stop-color="#6a6aa8"/></radialGradient></defs>
<g transform="translate(148.0,80.0)"><path d="M-11.2 -4.4 l4 -0.8 l5 -3.4 l5.4 3.2 l8 1 v7.6 q0 2.4 -2.4 2.4 h-1.8 v-5.6 l-3.4 0.6 l0.6 7.4 q-1.6 1.8 -3.6 0 l-0.8 -7.6 l-3.6 -0.4 v3.6 q-3 1.6 -5 0.4 v1.4 q-2.4 -0.4 -2.4 -2.4 z" fill="#1f1d6b"/><ellipse cx="0.2" cy="-2.8" rx="7.2" ry="3.1" fill="url(#stg)"/><path d="M0.6 1 l0.6 7" stroke="#a8a8d4" stroke-width="1.6"/></g>
<g transform="translate(0.0,0.0)"><path d="M181 75 l9 -4.2 l12 3.7 l0.2 10 l-9.2 5 l-11.5 -4.5 z" fill="#b9badb" stroke="#3c3c90" stroke-width="1.2" stroke-linejoin="round"/><path d="M181 75 l9 -4.2 l12 3.7 l-9 4.5 z" fill="#d2d3ea"/><path d="M193 79 l9 -4.5 l0.2 10 l-9.2 5 z" fill="#5a5aa2"/><path d="M181 75 l12 4 l9 -4.5 M193 79 v10.5" stroke="#4a4a98" stroke-width="0.8" fill="none"/><path d="M185 80.2 l4.6 4.4 l7.8 -8.4" stroke="#2a2a80" stroke-width="4" fill="none"/><path d="M185 80.2 l4.6 4.4 l7.8 -8.4" stroke="#2ecfc9" stroke-width="2.3" fill="none"/></g>
<g transform="translate(236.0,80.0)"><path d="M-9.2 -0.1 q9.2 -10 18.4 0 q-9.2 10 -18.4 0 z" fill="none" stroke="#1f1d6b" stroke-width="1.9"/><circle cx="0" cy="-0.4" r="3.8" fill="#1f1d6b"/><circle cx="-1.9" cy="-2.2" r="1.5" fill="#dfe1ec"/></g>
<g transform="translate(280.0,81.0)"><path d="M-9 -5 h3 q4.5 0 6 2.6 q1.5 -2.6 6 -2.6 h3 v11 h-3.5 q-3.5 0 -5.5 2.8 q-2 -2.8 -5.5 -2.8 h-3.5 z" fill="none" stroke="#28267a" stroke-width="2"/><path d="M-1.5 -5.5 l-4 -4 M-4.5 -5.8 l-3 -1.6 M1.5 -5.5 l4 -4 M4.5 -5.8 l3 -1.6" stroke="#2ecfc9" stroke-width="1.4"/></g>
<g transform="translate(324.0,79.0)"><circle cx="-4.2" cy="-2.8" r="5.6" fill="#fff" stroke="#28267a" stroke-width="1.3"/><path d="M-8 1.5 l-3 2.3 l4.5 -0.8 z" fill="#28267a"/><rect x="-4.9" y="-3.6" width="1.6" height="4.6" fill="#28267a"/><circle cx="-4.1" cy="-5.6" r="1" fill="#28267a"/><circle cx="4" cy="2.6" r="6.3" fill="#28267a"/><path d="M8 7 l3.6 2.6 l-5 -0.6 z" fill="#28267a"/><text x="4.00" y="6.20" font-size="9.5" fill="#fff" font-weight="bold" text-anchor="middle" font-style="normal" font-family="Liberation Sans, sans-serif" >?</text></g>
<g transform="translate(927.0,78.0)"><rect x="-7" y="-7.9" width="15" height="14.4" fill="none" stroke="#b8203a" stroke-width="2"/><circle cx="-5.6" cy="-6.5" r="3.5" fill="#dfe1ec" stroke="#2ecfc9" stroke-width="1.9"/></g>
<g transform="translate(962.0,78.0)"><text x="-2.60" y="3.40" font-size="17.5" fill="#2ecfc9" font-weight="bold" text-anchor="start" font-style="normal" font-family="Liberation Sans, sans-serif" textLength="11.60" lengthAdjust="spacingAndGlyphs" >U</text><path d="M-8 -1.5 v8.5 h8 M-8 7 l6.5 -6.5" stroke="#28267a" stroke-width="1.2" fill="none"/><path d="M-9.7 0.6 l1.7 -3 l1.7 3 z M-1.5 5.3 l3 1.7 l-3 1.7 z" fill="#28267a"/></g>
<g transform="translate(998.0,78.0)"><path d="M-10.8 4 h21.6 M-10.8 0.8 v6.4 M10.8 0.8 v6.4" stroke="#2ecfc9" stroke-width="1.5"/><text x="0.00" y="-1.20" font-size="9.2" fill="#28267a" font-weight="bold" text-anchor="middle" font-style="normal" font-family="Liberation Sans, sans-serif" textLength="8.00" lengthAdjust="spacingAndGlyphs" >m</text></g>
<g transform="translate(1034.0,77.0)"><path d="M-7.6 -1.5 a7.8 7.8 0 0 1 13.6 -4" stroke="#ff9a4d" stroke-width="2.6" fill="none"/><path d="M3 -5.2 l6.4 0.6 l-0.5 -6.4 z" fill="#ff9a4d"/><path d="M7.6 1.5 a7.8 7.8 0 0 1 -13.6 4" stroke="#ff9a4d" stroke-width="2.6" fill="none"/><path d="M-3 5.2 l-6.4 -0.6 l0.5 6.4 z" fill="#ff9a4d"/></g>
<path d="M1060.4 71 V81.8 M1067.4 70.5 V76" stroke="#1f1d6b" stroke-width="1.5"/><path d="M1060.4 71.6 Q1064 80.5 1067.4 71.6 Q1064 75.500 1060.4 71.6 Z" fill="#6a6aaa" stroke="#4a4a98" stroke-width="0.6"/>
<path d="M1068.7 86.2 V79.5 Q1068.700 76.3 1072 76.3 H1076.2 Q1079.500 76.3 1079.5 79.5 V86.2 Z" fill="#dfe1ec" stroke="#2ecfc9" stroke-width="3" stroke-linejoin="round"/>
<path d="M1074.6 68.200 Q1079 69.300 1079.8 73.400" stroke="#2ecfc9" stroke-width="2.6" fill="none"/>
<path d="M1074.1 79 V84.8" stroke="#3a3a88" stroke-width="1.5" stroke-dasharray="1.7 0.9"/>
<path d="M1095 72 H1104 M1095 75.900 H1104 M1095 79.800 H1104 M1097 70.700 V81 M1101.200 70.700 V81" stroke="#1f1d6b" stroke-width="1.1"/>
<path d="M1104.5 85.200 V79.1 Q1104.500 75.900 1107.8 75.900 H1112.2 Q1115.500 75.900 1115.5 79.1 V85.2 Z" fill="#dfe1ec" stroke="#ffa94d" stroke-width="3" stroke-linejoin="round"/>
<path d="M1105.2 72.600 V71.800 A4.900 4.400 0 0 1 1115 71.800 V72.600" stroke="#ffa94d" stroke-width="2.500" fill="none"/>
<path d="M1110 78.600 V84.200" stroke="#3a3a88" stroke-width="1.5" stroke-dasharray="1.7 0.9"/>
<path d="M1134 77.600 V69 H1149.900 V84.900 H1141.400" stroke="#1f1d6b" stroke-width="2.2" fill="none"/><rect x="1134" y="79" width="5.8" height="5.900" fill="none" stroke="#1f1d6b" stroke-width="2"/><path d="M1141.600 77.300 l5 -4.700" stroke="#2ecfc9" stroke-width="1.700"/><path d="M1144.200 71.200 l4.300 -0.600 l-0.700 4.300 z" fill="#2ecfc9"/>
<rect x="1165.00" y="65.00" width="1.00" height="24.50" fill="#3a3a4a" />
<rect x="1177.00" y="71.00" width="24.00" height="16.00" fill="#24469a" />
<circle cx="1189.0" cy="79" r="4.6" fill="none" stroke="#d8c64a" stroke-width="1" stroke-dasharray="1 1.4"/>
<rect x="1213.00" y="71.00" width="24.00" height="16.00" fill="#24469a" />
<circle cx="1225.0" cy="79" r="4.6" fill="none" stroke="#d8c64a" stroke-width="1" stroke-dasharray="1 1.4"/>
<g transform="translate(1262.0,78.4)"><circle cx="-1.5" cy="-6.6" r="4" fill="none" stroke="#28267a" stroke-width="1.8"/><path d="M-10.5 9 v-2.5 q0 -4.5 4.5 -4.5 h4" stroke="#28267a" stroke-width="1.8" fill="none"/><circle cx="4.8" cy="4" r="4.4" fill="#f08a5a"/><path d="M2.8 2 l4 4 M6.8 2 l-4 4" stroke="#fff" stroke-width="1"/></g>
<g transform="translate(57.0,130.0)" ><rect x="-6.15" y="-8" width="3.3" height="16" fill="#f4dfe2" stroke="#b8203a" stroke-width="1.5"/><path d="M-4.6 0.5 h8.4" stroke="#2ecfc9" stroke-width="2.5"/><path d="M3 -3.2 l6.8 3.7 l-6.8 3.7 z" fill="#2ecfc9"/></g>
<g transform="translate(57.0,162.0)" ><rect x="-6.15" y="-8" width="3.3" height="16" fill="#f4dfe2" stroke="#b8203a" stroke-width="1.5"/><path d="M-4.8 0 h13.7 M2 -6.7 v13.5" stroke="#2ecfc9" stroke-width="4"/></g>
<g transform="translate(57.0,194.0)" ><rect x="-6.15" y="-8" width="3.3" height="16" fill="#f4dfe2" stroke="#b8203a" stroke-width="1.5"/><path d="M-3.6 -1.3 h12.5 M2.7 -6.5 v11" stroke="#28267a" stroke-width="2.1"/><path d="M-4.8 1 h11.1 M0.7 -4.5 v11" stroke="#2ecfc9" stroke-width="2.1"/></g>
<g transform="translate(57.0,226.0)" ><path d="M0.2 -9 v17.8" stroke="#2ecfc9" stroke-width="2"/><path d="M-2.4 -5.2 v11.1 h-5.6 z" fill="#b8203a"/><path d="M2.8 -5.2 v11.1 h5.4 z" fill="#e59aa3"/></g>
<g transform="translate(57.0,258.0)" ><rect x="-8.9" y="-8.7" width="4.7" height="4.4" fill="#2ecfc9"/><rect x="-8.15" y="-1.75" width="3.4" height="9.8" fill="#f4dfe2" stroke="#b8203a" stroke-width="1.5"/><path d="M-2.6 -7.2 l7.4 5.8 M-2.6 1.6 l7.4 -7" stroke="#28267a" stroke-width="1.5"/><circle cx="6.3" cy="-6.4" r="1.9" fill="none" stroke="#28267a" stroke-width="1.3"/><circle cx="6.4" cy="-0.4" r="2" fill="none" stroke="#28267a" stroke-width="1.3"/></g>
<g transform="translate(57.0,290.0)" ><path d="M6.6 -7.8 l-5 5.6" stroke="#28267a" stroke-width="3.6" stroke-linecap="round"/><path d="M-8.5 0.8 l8.4 -5.6 l4.7 7 l-5.3 6.6 z" fill="#28267a"/><path d="M-2.6 -3.6 l4.8 7" stroke="#8f90c0" stroke-width="0.8"/></g>
<g transform="translate(57.0,322.0)" ><path d="M-7.7 8.6 v-12.4 l7.7 -3.4 l7.7 3.4 v6" stroke="#e3919a" stroke-width="2" fill="none"/><path d="M-7.7 2.5 h15.4 M7.7 1.5 v7.1" stroke="#b8203a" stroke-width="2" fill="none"/></g>
<g transform="translate(57.0,354.0)" ><path d="M-8 7 v-10.6 l7.5 -3 l7.5 3 v10.6 M-8 3.6 h15" stroke="#efc3c8" stroke-width="2" fill="none"/><rect x="-5.2" y="-9.5" width="14.2" height="14.2" fill="none" stroke="#bfc0d6" stroke-width="1.1" stroke-dasharray="1.8 1.6"/></g>
<g transform="translate(57.0,386.0)" ><path d="M-5 -4.6 l4 -3.8 h9.6 l-4 3.8 z M-5 -0.8 l4 -3.8 h9.6 l-4 3.8 z M-5 3 l4 -3.8 h9.6 l-4 3.8 z" fill="#d5f3f1" stroke="#2ecfc9" stroke-width="1.2" stroke-linejoin="round"/><path d="M-8.4 9 v-5.8 M-1 9 v-5.8 M-8.4 6 h7.4 M-8.6 3 l3.9 -1.6 l3.9 1.6" stroke="#b8203a" stroke-width="1.2" fill="none"/></g>
<g transform="translate(57.0,418.0)" ><path d="M-8 1.6 h15.5 M7.5 -4.6 v11.2" stroke="#2ecfc9" stroke-width="1.4" fill="none"/><path d="M-8 6.8 v-11.6 l7.8 -3.4 l7.8 3.4 v1.2" stroke="#b8203a" stroke-width="2.4" fill="none"/></g>
<g transform="translate(57.0,450.0)" ><rect x="-8.2" y="-7.6" width="16.2" height="15.6" fill="none" stroke="#b9bad2" stroke-width="1.2" stroke-dasharray="2.2 1.8"/><path d="M-4.8 1.2 l3 3 l7 -7" stroke="#a8e4e1" stroke-width="2.1" fill="none"/><path d="M6.8 -11 v6 M3.8 -8 h6" stroke="#96e0dc" stroke-width="1.7"/></g>
<g transform="translate(57.0,482.0)" ><path d="M-7.6 -3 l4.6 -4.6 h10.8 l-4.6 4.6 z M-7.6 2 l4.6 -4.6 h10.8 l-4.6 4.6 z M-7.6 7 l4.6 -4.6 h10.8 l-4.6 4.6 z" fill="none" stroke="#28267a" stroke-width="1.8" stroke-linejoin="miter"/></g>
<g transform="translate(57.0,514.0)" ><path d="M-8.9 -7.500 h10 M-8.9 1.700 h10" stroke="#28267a" stroke-width="2.900" fill="none"/><path d="M-4 -7.6 v9.4" stroke="#28267a" stroke-width="3.800"/><path d="M1.6 -1.900 h5.700 v9.400 h-5.700" stroke="#28267a" stroke-width="3" fill="none"/></g>
<g transform="translate(57.0,546.0)" ><path d="M-4.2 -2.2 l3.5 3.2 l8.4 -8" stroke="#2ecfc9" stroke-width="2.3" fill="none"/><path d="M-8.4 8.8 v-4.6 l3.5 -2 l3.5 2 v4.6 M-8.4 6.4 h7" stroke="#c75a68" stroke-width="1.3" fill="none"/></g>
<g transform="translate(57.0,578.0)" ><rect x="-7.9" y="-1.6" width="11.9" height="9.3" fill="#e4f6f5" stroke="#2ecfc9" stroke-width="1.3"/><path d="M-6 1.2 h2 M-2.6 1.2 h5 M-6 3.4 h2 M-2.6 3.4 h5 M-6 5.6 h2 M-2.6 5.6 h5" stroke="#2ecfc9" stroke-width="1.1"/><path d="M-0.2 -8.1 l8.2 8.2 M8 -8.1 l-8.2 8.2" stroke="#f01822" stroke-width="2.8"/></g>
<g transform="translate(57.0,610.0)" ><path d="M-5.9 -2 v9.8 h9.5" stroke="#28267a" stroke-width="1.3" fill="none"/><path d="M-7.7 -0.6 l1.8 -3.6 l1.8 3.6 z M2.4 6 l3.6 1.8 l-3.6 1.8 z" fill="#28267a"/><path d="M3 -3.6 l-2.4 8.6" stroke="#2ecfc9" stroke-width="3"/><circle cx="3.1" cy="-6.7" r="1.7" fill="#2ecfc9"/></g>
<g transform="translate(938.5,322.0)" ><path d="M-3 9 V-1.5 L8 -5.3" stroke="#b9b9dd" stroke-width="1" fill="none"/><path d="M-6.5 9.5 V-2.6 H-4.1 V-5.5 L7.5 -8.9" stroke="#28267a" stroke-width="2" fill="none"/><path d="M0.3 9.5 V0.6 L9.3 -2.4" stroke="#28267a" stroke-width="2" fill="none"/><circle cx="-1" cy="-0.6" r="0.9" fill="#fff"/></g>
<g transform="translate(938.5,354.2)" ><path d="M-5.5 9.5 V-2 L8 -6.2 L9 -2.6 L-0.7 0.8 V9.5 Z" fill="#7fe3df"/><path d="M-3.2 9.5 V-0.2 L8.6 -4.2 L9 -2.6 L-0.7 0.8 V9.5 Z" fill="#2ecfc9"/><path d="M-6.5 9.5 V-2.6 H-4.1 V-5.5 L7.5 -8.9" stroke="#28267a" stroke-width="2" fill="none"/><path d="M0.3 9.5 V0.6 L9.3 -2.4" stroke="#28267a" stroke-width="2" fill="none"/></g>
<g transform="translate(938.5,386.0)" ><circle cx="-3.8" cy="-4.8" r="2.5" fill="#b8203a"/><path d="M-3.8 -3.4 l4.6 9 h-9.2 z" fill="#b8203a"/><circle cx="5" cy="1" r="2.4" fill="#f0bcc2"/><path d="M5 2.4 l4.4 8.6 h-8.8 z" fill="#f0bcc2"/></g>
<g transform="translate(938.5,418.0)" ><circle cx="-5.4" cy="-6.2" r="2.5" fill="#28267a"/><path d="M-5.4 -4 v9" stroke="#28267a" stroke-width="1.5"/><path d="M-9 3 h7.2 l-3.6 6 z" fill="#28267a"/><circle cx="5.4" cy="-6.2" r="2.5" fill="#c9cade"/><path d="M5.4 -4 v9" stroke="#c9cade" stroke-width="1.5"/><path d="M1.8 3 h7.2 l-3.6 6 z" fill="#c9cade"/></g>
<g transform="translate(939.0,450.0)" ><ellipse cx="0" cy="-5.7" rx="7.8" ry="2.9" fill="none" stroke="#28267a" stroke-width="1.5"/><path d="M-7.8 -5.7 v11.8 a7.8 2.9 0 0 0 15.6 0 v-11.8 M-7.8 -1.8 a7.8 2.9 0 0 0 15.6 0 M-7.8 2.2 a7.8 2.9 0 0 0 15.6 0" fill="none" stroke="#28267a" stroke-width="1.5"/></g>
<g transform="translate(938.5,482.0)" ><path d="M-5.5 -9 v17.8" stroke="#28267a" stroke-width="1.7"/><rect x="-8.65" y="-0.15" width="6.3" height="6.4" fill="#eaa4ac" stroke="#c0304a" stroke-width="1.5"/><rect x="-0.5" y="-8.1" width="10" height="4.6" fill="#2ecfc9"/><path d="M5.2 -4 l-6.4 6.6" stroke="#2ecfc9" stroke-width="1.9"/></g>
<g transform="translate(938.5,514.0)" ><rect x="-6.500" y="-8.300" width="3.4" height="16.6" fill="#eeeef6" stroke="#28267a" stroke-width="1.6"/><rect x="-0.5" y="-8.1" width="10" height="4.6" fill="#2ecfc9"/><path d="M5.2 -4 l-6.4 6.6" stroke="#2ecfc9" stroke-width="1.9"/></g>
<g transform="translate(938.5,546.0)" ><circle cx="-7" cy="-7" r="1.55" fill="#28267a"/><circle cx="-7" cy="0" r="1.55" fill="#28267a"/><circle cx="-7" cy="7" r="1.55" fill="#28267a"/><circle cx="0" cy="-7" r="1.55" fill="#28267a"/><circle cx="0" cy="0" r="1.55" fill="#28267a"/><circle cx="0" cy="7" r="1.55" fill="#28267a"/><circle cx="7" cy="-7" r="1.55" fill="#28267a"/><circle cx="7" cy="0" r="1.55" fill="#28267a"/><circle cx="7" cy="7" r="1.55" fill="#28267a"/></g>
<g transform="translate(938.5,578.6)" ><rect x="-7.8" y="-7.8" width="15.6" height="15.6" fill="none" stroke="#ebc8cd" stroke-width="1.1" stroke-dasharray="2.2 1.8"/><path d="M-4.4 0.6 l3 3 l6.4 -6.4" stroke="#bdeae8" stroke-width="2.1" fill="none"/></g>
<g transform="translate(939.3,611.5)" ><path d="M-7.600 -9.400 h10 M-7.600 -6 h10 M-7.600 -2.600 h10" stroke="#2ecfc9" stroke-width="1.9"/><path d="M-7.4 3.800 q7.6 -7.4 14.8 0 q-7.2 7.2 -14.8 0 z" fill="none" stroke="#28267a" stroke-width="1.5"/><circle cx="0.4" cy="3.600" r="3" fill="#28267a"/><circle cx="-0.8" cy="2.400" r="1" fill="#ebebeb"/></g>
<path d="M449.1 715.4 l2.4 -2 h5 v15.4 l-2.4 2 h-5 z" fill="#e6b3b9"/><path d="M454.1 715.4 l2.4 -2 v15.4 l-2.4 2 z" fill="#dba3aa"/><path d="M449.1 715.4 h5 l2.4 -2 h-5 z" fill="#f3d9dc"/>
<rect x="458" y="712.2" width="10" height="4.8" fill="#b2e6e3"/><path d="M464 716.6 l-8.4 8" stroke="#b2e6e3" stroke-width="2"/>
<path d="M482 715.1 h8 M482 727.7 h8 M486 715.1 v12.6" stroke="#e6b3b9" stroke-width="2.3"/><path d="M490 715.1 h7" stroke="#b2e6e3" stroke-width="1.6"/><path d="M495.6 715.1 l4.4 -3.2 v6.4 z" fill="#b2e6e3"/>
<clipPath id="hgc"><rect x="514" y="712.2" width="17.8" height="17.8"/></clipPath><rect x="514" y="712.2" width="17.8" height="17.8" fill="#e6b3b9"/><g clip-path="url(#hgc)"><circle cx="513.2" cy="721.1" r="7.4" fill="#b2e6e3"/><circle cx="532.6" cy="721.1" r="7.4" fill="#b2e6e3"/></g><rect x="514" y="712.2" width="17.8" height="2.7" fill="#dba3aa"/><rect x="514" y="727.3" width="17.8" height="2.7" fill="#dba3aa"/><path d="M521 715.4 h3.8 l-1.9 3.4 z M521 726.8 h3.8 l-1.9 -3.4 z" fill="#f2e6e8"/>
<path d="M546.2 725.4 l6 -9.8 q2.6 -1.6 4.8 -0.2 q2.2 1.2 4.4 0 l3.4 -0.2 l-6 9.8 q-2.4 1.8 -4.6 0.4 q-2 -1.6 -4.2 0.2 z" fill="#e6b3b9" stroke="#dba3aa" stroke-width="0.9"/><path d="M551.4 725.6 l6 -10 M555.6 726 l6 -10.4" stroke="#dba3aa" stroke-width="0.7"/>
<path d="M590 715.2 h-10.2 l5 5.9 l-5 7.9 h10.2" stroke="#e6b3b9" stroke-width="2" fill="none" stroke-linejoin="miter"/><rect x="586.8" y="715" width="10.2" height="4.8" fill="#b2e6e3"/><path d="M592 719.4 l-7.6 5" stroke="#b2e6e3" stroke-width="2"/>
<path d="M609.2 713.2 l2.2 -2.2 h5.2 v17.6 l-2.2 2.2 h-5.2 z" fill="#e6b3b9"/><path d="M614.4 713.2 l2.2 -2.2 v17.6 l-2.2 2.2 z" fill="#dba3aa"/><path d="M609.2 713.2 h5.2 l2.2 -2.2 h-5.2 z" fill="#f3d9dc"/>
<path d="M621.4 713.2 l2.2 -2.2 h5.2 v17.6 l-2.2 2.2 h-5.2 z" fill="#e6b3b9"/><path d="M626.6 713.2 l2.2 -2.2 v17.6 l-2.2 2.2 z" fill="#dba3aa"/><path d="M621.4 713.2 h5.2 l2.2 -2.2 h-5.2 z" fill="#f3d9dc"/>
<path d="M612.6 717.6 h11.4 M612.6 722.6 h11.4 M612.6 727.6 h11.4" stroke="#b2e6e3" stroke-width="2.7"/>
<g transform="translate(691.0,663.5)" ><rect x="-9.5" y="-4.4" width="19" height="12.6" rx="1.6" fill="#28267a"/><path d="M-4.6 -4.4 v-2.2 q0 -1.6 1.6 -1.6 h6 q1.6 0 1.6 1.6 v2.2" stroke="#28267a" stroke-width="1.5" fill="none"/><path d="M-9.5 1.6 h19" stroke="#e9e9e9" stroke-width="1.4"/><rect x="-5.4" y="0" width="2.4" height="3.4" fill="#e9e9e9"/><rect x="3" y="0" width="2.4" height="3.4" fill="#e9e9e9"/></g>
<g transform="translate(691.0,689.5)" ><path d="M-8.6 2.6 l9.2 -8.6 l7.2 -1.6 l1.2 7 l-9.6 9.2 z" fill="#a8a9d6" stroke="#3a3a8a" stroke-width="1.3" stroke-linejoin="round"/><circle cx="5" cy="-4" r="1.8" fill="#e9e9e9" stroke="#3a3a8a" stroke-width="1"/></g>
<path d="M759.1 680.6 v-4.5 h4.8 M772.2 676.1 h4.8 v4.5 M759.1 688.8 v4.5 h4.8" stroke="#2ecfc9" stroke-width="1.9" fill="none"/><circle cx="767.9" cy="684.4" r="5.8" fill="none" stroke="#28267a" stroke-width="1.9"/><path d="M772.2 688.8 l4.6 4.4" stroke="#28267a" stroke-width="2.7"/>
<path d="M790 678.8 l9.7 -3.5 l10 3.5 l-2.5 11.4 l-7.5 4 l-6.9 -4 z" fill="#f2f2f3" stroke="#28267a" stroke-width="1.6" stroke-linejoin="round"/><path d="M799.7 683.9 l10 -5.1 l-2.5 11.4 l-7.5 4 z" fill="#2ecfc9"/><path d="M790 678.8 l9.7 5.1 l10 -5.1 M799.7 683.9 v10.3" stroke="#28267a" stroke-width="1.5" fill="none"/>
<g transform="translate(832.7,689.5)" ><g transform="scale(1,1)"><path d="M-7.6 0 q7.6 -7.8 15.2 0 q-7.6 7.6 -15.2 0 z" fill="none" stroke="#c6c7de" stroke-width="1.2"/><circle cx="0.6" cy="-0.2" r="2.9" fill="#c6c7de"/><path d="M7.6 -4.4 q-3.6 -4.4 -9 -4.2 v-2.6 l-5.8 4.2 l5.8 4 v-2.6 q4.8 -0.6 9 1.2 z" fill="#c0eeeb"/></g></g>
<g transform="translate(864.6,689.5)" ><g transform="scale(-1,1)"><path d="M-7.6 0 q7.6 -7.8 15.2 0 q-7.6 7.6 -15.2 0 z" fill="none" stroke="#c6c7de" stroke-width="1.2"/><circle cx="0.6" cy="-0.2" r="2.9" fill="#c6c7de"/><path d="M7.6 -4.4 q-3.6 -4.4 -9 -4.2 v-2.6 l-5.8 4.2 l5.8 4 v-2.6 q4.8 -0.6 9 1.2 z" fill="#c0eeeb"/></g></g>
<defs><linearGradient id="tig" x1="0" y1="0" x2="1" y2="1"><stop offset="0" stop-color="#2f9c98"/><stop offset="0.6" stop-color="#48b3ae"/><stop offset="1" stop-color="#7fcfcb"/></linearGradient></defs>
<rect x="6" y="7" width="16" height="16" rx="1.6" fill="url(#tig)"/>
<path d="M15.5 8.3 l2.2 3.2 l-1 1 l2.6 3.2 l-1.6 0.6 l1.2 1.6 l-3.4 1.6 l0.6 1.6 l-1.6 -0.4 l-1.2 -2 l-4.6 -2.2 l0.4 -2.6 l2.2 -2.2 l1.4 -0.6 z" fill="#0f5256"/>
<path d="M10.5 13 l7 3.6 M11.5 11 l7.4 4.2 M13 9.6 l-2.4 7 M15.3 9 l-2 9.6 M17.2 11.6 l-1.6 7.4" stroke="#3a9c98" stroke-width="0.5"/>
<text x="7.40" y="12.80" font-size="5.6" fill="#e6f6f5" font-weight="bold" text-anchor="start" font-style="normal" font-family="Liberation Sans, sans-serif" textLength="5.60" lengthAdjust="spacingAndGlyphs" >25</text>
<path d="M17.3 32.8 l1.9 3.6 l-0.9 0.5 l2.6 4 l-1 0.6 l3 4.4 l-4.4 2.2 l-1.4 1.4 l0.2 1.8 l1.4 2 l1.4 0.6 l-0.4 0.6 l-2 -0.6 l-2 -2.6 l-1.2 -2.8 l-1.6 1.2 l-0.6 -1.6 l-1.2 0.6 l-0.4 -1.4 l-1.6 0.4 l-0.2 -1.6 l-1.4 0 l0.6 -2 l-1.2 -0.4 l1.6 -2.2 l1.2 -2.2 l2.6 -2.6 l2.6 -2 z" fill="#fff"/>
<path d="M7.5 42.5 l13.5 6.2 M8.5 40.2 l13 5.6 M10.5 37.6 l10 4.4 M13 35.6 l6 3 M14.6 34.6 l-6.4 12.4 M17 35.6 l-6.6 13 M18.6 38.6 l-5.6 11 M20.4 41.6 l-5 9.6" stroke="#2ad0c9" stroke-width="0.55"/>
<path d="M1027 114.6 l-3.7 -3.5 h-9.9 v17.6 h13.4 v-3.8" fill="none" stroke="#1f1d6b" stroke-width="2.4" stroke-linejoin="miter"/>
<rect x="1020.00" y="115.95" width="3.00" height="1.90" fill="#2ecfc9" />
<rect x="1024.20" y="115.95" width="4.90" height="1.90" fill="#2ecfc9" />
<rect x="1020.00" y="119.05" width="3.00" height="1.90" fill="#2ecfc9" />
<rect x="1024.20" y="119.05" width="4.90" height="1.90" fill="#2ecfc9" />
<rect x="1020.00" y="122.15" width="3.00" height="1.90" fill="#2ecfc9" />
<rect x="1024.20" y="122.15" width="4.90" height="1.90" fill="#2ecfc9" />
<g transform="translate(10.6,-2.8)"><path d="M38.8 657 v-12.6 q4 -1.4 6.4 0.6 q2.6 2 3.2 5 v9.6 l-1.6 0.6 z" fill="#f4f4fa" stroke="#3f3f92" stroke-width="0.9" stroke-linejoin="round"/><path d="M40.4 651.4 q0.2 -4.600 2.8 -4.6 q2.6 0.6 3.6 5.6" stroke="#d2405a" stroke-width="1.5" fill="none"/><path d="M40.2 653 l6.600 2.2 M40.2 654.8 l6.6 2.2 M40.2 656.5 l6.6 2.2" stroke="#8d8ec6" stroke-width="0.7"/></g>
<g transform="translate(5.3,-1.4)"><path d="M38.8 657 v-12.6 q4 -1.4 6.4 0.6 q2.6 2 3.2 5 v9.6 l-1.6 0.6 z" fill="#f4f4fa" stroke="#3f3f92" stroke-width="0.9" stroke-linejoin="round"/><path d="M40.4 651.4 q0.2 -4.600 2.8 -4.6 q2.6 0.6 3.6 5.6" stroke="#d2405a" stroke-width="1.5" fill="none"/><path d="M40.2 653 l6.600 2.2 M40.2 654.8 l6.6 2.2 M40.2 656.5 l6.6 2.2" stroke="#8d8ec6" stroke-width="0.7"/></g>
<g transform="translate(0.0,0.0)"><path d="M38.8 657 v-12.6 q4 -1.4 6.4 0.6 q2.6 2 3.2 5 v9.6 l-1.6 0.6 z" fill="#f4f4fa" stroke="#3f3f92" stroke-width="0.9" stroke-linejoin="round"/><path d="M40.4 651.4 q0.2 -4.600 2.8 -4.6 q2.6 0.6 3.6 5.6" stroke="#d2405a" stroke-width="1.5" fill="none"/><path d="M40.2 653 l6.600 2.2 M40.2 654.8 l6.6 2.2 M40.2 656.5 l6.6 2.2" stroke="#8d8ec6" stroke-width="0.7"/></g>
<g transform="translate(0.0,0.0)"><path d="M77.6 660 V652.4 M88.4 664.4 V653" stroke="#d8616f" stroke-width="3.4"/><path d="M77.6 660 V652.4 M88.4 664.4 V653" stroke="#f3c9ce" stroke-width="0.8"/><path d="M68.2 656.2 L74.6 651 L83.2 647.2 L76.8 652 Z" fill="#c2364a"/><path d="M74.6 651 L83.2 647.2 L89.8 652.6 L81.4 657.2 Z" fill="#c2364a"/><path d="M77 653.6 L81.4 651.6 L84.6 654.2 L80.4 656.4 Z" fill="#f5f4f4"/><path d="M70.6 656 L74.8 652.6 L78.6 651" stroke="#f0b0b8" stroke-width="0.8" fill="none"/><path d="M69.6 663.6 V656.4 L74.8 652.4 L80.6 657 V668" stroke="#d8616f" stroke-width="3.4" fill="none" stroke-linejoin="miter"/><path d="M69.6 663.6 V656.4 M80.6 657.6 V668" stroke="#f3c9ce" stroke-width="0.9" fill="none"/><path d="M68.2 656.4 L74.8 651.2 L81.6 657" stroke="#c2364a" stroke-width="2.2" fill="none"/></g>
<g transform="translate(13.4,27.6)"><path d="M77.6 660 V652.4 M88.4 664.4 V653" stroke="#2f2f86" stroke-width="3.4"/><path d="M77.6 660 V652.4 M88.4 664.4 V653" stroke="#b9b9e4" stroke-width="0.8"/><path d="M68.2 656.2 L74.6 651 L83.2 647.2 L76.8 652 Z" fill="#4fd9d4"/><path d="M74.6 651 L83.2 647.2 L89.8 652.6 L81.4 657.2 Z" fill="#4fd9d4"/><path d="M77 653.6 L81.4 651.6 L84.6 654.2 L80.4 656.4 Z" fill="#f5f4f4"/><path d="M70.6 656 L74.8 652.6 L78.6 651" stroke="#c9f5f3" stroke-width="0.8" fill="none"/><path d="M69.6 663.6 V656.4 L74.8 652.4 L80.6 657 V668" stroke="#2f2f86" stroke-width="3.4" fill="none" stroke-linejoin="miter"/><path d="M69.6 663.6 V656.4 M80.6 657.6 V668" stroke="#b9b9e4" stroke-width="0.9" fill="none"/><path d="M68.2 656.4 L74.8 651.2 L81.6 657" stroke="#4fd9d4" stroke-width="2.2" fill="none"/></g>
<g transform="translate(78.9,712.6)" ><path d="M-10.5 -1.6 l8 -4.4 l13 3 v7.6 l-3 1.4 v-5 l-4 2.4 v6.6 l-3.4 1.2 v-6.6 l-4.6 -1.6 v4.6 l-3 -1 z" fill="#9a9bd0"/><path d="M-10.5 -1.6 l8 -4.4 l13 3 l-8 4.6 z" fill="#c9caea"/><path d="M-8 -9.5 l7 -2.6 l9.6 2.4 l-6.6 3 z" fill="#a9ece9" stroke="#4fd8d3" stroke-width="0.7"/><path d="M-8.4 -10.0 v6" stroke="#2ecfc9" stroke-width="1.6"/><circle cx="-8.4" cy="-10.0" r="1.7" fill="#2ecfc9"/><circle cx="-8.4" cy="-4.0" r="1.5" fill="#2ecfc9"/><path d="M-1.0 -12.4 v6" stroke="#2ecfc9" stroke-width="1.6"/><circle cx="-1.0" cy="-12.4" r="1.7" fill="#2ecfc9"/><circle cx="-1.0" cy="-6.4" r="1.5" fill="#2ecfc9"/><path d="M8.6 -10.0 v6" stroke="#2ecfc9" stroke-width="1.6"/><circle cx="8.6" cy="-10.0" r="1.7" fill="#2ecfc9"/><circle cx="8.6" cy="-4.0" r="1.5" fill="#2ecfc9"/><path d="M2.0 -6.6 v6" stroke="#2ecfc9" stroke-width="1.6"/><circle cx="2.0" cy="-6.6" r="1.7" fill="#2ecfc9"/><circle cx="2.0" cy="-0.6" r="1.5" fill="#2ecfc9"/></g>
<defs><radialGradient id="rbw" cx="0.5" cy="0.55" r="0.5"><stop offset="0" stop-color="#f08f8f"/><stop offset="0.3" stop-color="#f2c27c"/><stop offset="0.55" stop-color="#e8ec88"/><stop offset="0.8" stop-color="#98e0a0"/><stop offset="1" stop-color="#8fd6e6"/></radialGradient></defs>
<path d="M37.7 714.6 l8.700 -4.4 l2.4 1.2 l2.6 -0.8 l8.5 4 v9.6 q-2.2 1 -4.400 0 v-6 l-3.6 0.8 v8 q-2 1.200 -4 0 v-8.200 l-3.4 -0.8 v3.4 q-1.400 0.8 -2.600 0.2 v2.800 q-2.2 1 -4.200 0 z" fill="#a9a8ea"/>
<ellipse cx="48.7" cy="715.6" rx="8.6" ry="3.7" fill="url(#rbw)"/>
<rect x="48" y="719.4" width="3.5" height="6.8" fill="#9ad6f0"/>
<path d="M14.7 695.2 l8.8 -4.500 l1.600 2.6 l3.600 0.600 l7.200 0.200 v9.5 l-7.800 5 l-2.200 -2 l-4 0.800 l-1.800 -2.200 l-5.400 -0.200 z" fill="#b92a3d"/><path d="M28.1 699.400 l7.800 -5.300 v9.5 l-7.800 5 z" fill="#7a1424"/><path d="M14.7 695.2 l8.8 -4.500 l1.600 2.6 l3.600 0.600 l7.200 0.200 l-7.800 5.300 l-2.200 -1.400 l-4 0.400 l-1.800 -2.600 z" fill="#d8606c"/><path d="M16.5 695.3 l6.600 -3.300 M27.500 697.800 l6.200 -3.400" stroke="#f0b4ba" stroke-width="0.8"/><path d="M20.1 695.800 l1.800 2.600 v9.200 l-1.800 -2.200 z" fill="#8c1a2b"/><path d="M21.900 698.400 l4 -0.400 v8.800 l-4 0.800 z" fill="#cf4a5a"/>
<path d="M14.6 664.5 l7.4 -4 l13 3 v10 l-7.5 4.9 l-12.5 -3.9 z" fill="#a9a9d1" stroke="#9d9dcb" stroke-width="0.8" stroke-linejoin="round"/><path d="M27.5 669 l7.5 -5.5 v10 l-7.5 4.900 z" fill="#8485bb"/><path d="M14.6 664.5 l7.4 -4 l13 3 l-7.5 5.500 z" fill="#c4c5e3"/><ellipse cx="23.0" cy="662.4" rx="1.8" ry="1" fill="#e0475c"/><ellipse cx="18.4" cy="664.4" rx="1.8" ry="1" fill="#e0475c"/><ellipse cx="31.0" cy="664.4" rx="1.8" ry="1" fill="#e0475c"/><ellipse cx="26.4" cy="666.6" rx="1.8" ry="1" fill="#e0475c"/>
<g transform="translate(55.6,684.5)" ><rect x="-7.2" y="-7.2" width="14.4" height="14.4" fill="#e6e6f2" stroke="#2c2c80" stroke-width="1.5"/><path d="M0 -7.2 v14.4 M-7.2 0 h14.4" stroke="#2c2c80" stroke-width="1.3"/><rect x="-5" y="-5" width="3.4" height="3.4" fill="none" stroke="#2c2c80" stroke-width="0.9"/><path d="M2.2 -3.4 h3.4" stroke="#2c2c80" stroke-width="1"/><rect x="-5" y="2" width="3.2" height="3.2" fill="none" stroke="#2c2c80" stroke-width="0.9"/><circle cx="4.3" cy="4" r="5" fill="#34cfc9"/><rect x="1.4" y="2" width="5.8" height="4" fill="#3b7aa0"/></g>
</svg>
</body></html>
